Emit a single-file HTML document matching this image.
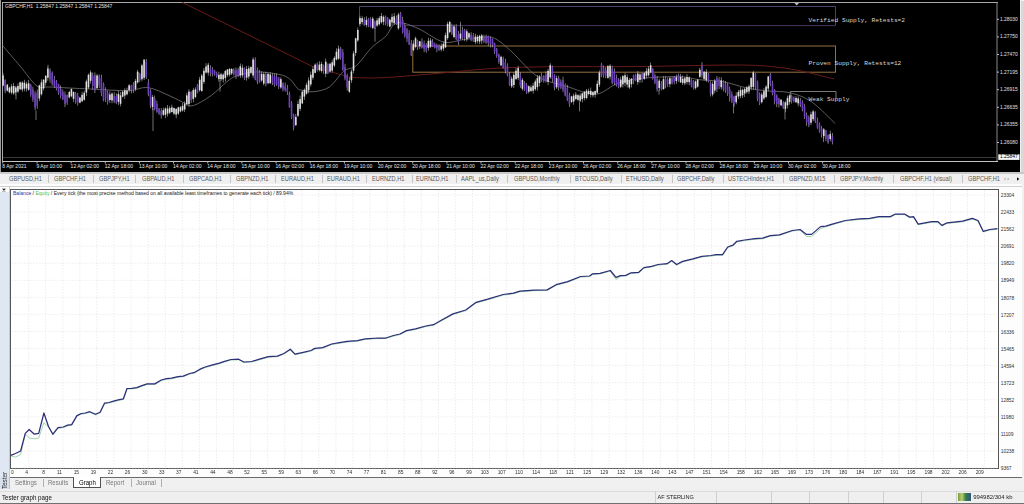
<!DOCTYPE html>
<html><head><meta charset="utf-8"><style>
html,body{margin:0;padding:0;width:1024px;height:504px;overflow:hidden;background:#f0f0f0;position:relative}
.t{position:absolute;white-space:nowrap;line-height:1.2;font-family:'Liberation Sans', sans-serif}
</style></head><body>
<div id="wrap" style="position:absolute;left:0;top:0;width:1024px;height:504px;filter:blur(0.35px)"><svg width="1024" height="172" style="position:absolute;left:0;top:0"><rect x="0" y="0" width="1020" height="172" fill="#000"/><rect x="0" y="0" width="1" height="172" fill="#9a9a9a"/><rect x="1021" y="1" width="3" height="171" fill="#d8d8d8"/><rect x="2" y="2" width="996" height="1" fill="#a8a8a8"/><rect x="2" y="2" width="1" height="160" fill="#a8a8a8"/><rect x="996.5" y="2" width="1" height="160" fill="#8a8a8a"/><rect x="2" y="161" width="996" height="1" fill="#c4c4c4"/><rect x="3" y="157" width="994" height="1" fill="#3a3a3a"/><path d="M794.5 3 L799 3 L796.7 5.6 Z" fill="#bdbdbd"/><path d="M359.5,25.5 V6.5 H835.5 V25.5" fill="none" stroke="#524a78" stroke-width="0.9"/><rect x="405" y="25.1" width="430.5" height="1" fill="#4a3262"/><rect x="412.8" y="46" width="422.7" height="26.2" fill="none" stroke="#94703e" stroke-width="1"/><path d="M790.3 98.5 V91.5 H836 V98.5" fill="none" stroke="#7a7a7a" stroke-width="1"/><path d="M182.5,2.5 L312.3,66.4  C316.2,67.5 328.9,71.4 335.8,73.2 C342.7,75.0 345.5,76.7 353.5,77.4 C361.5,78.1 371.1,78.2 384,77.6 C396.9,77.0 409.7,75.7 431,74 C452.3,72.3 477.2,68.8 512,67.5 C546.8,66.2 602.7,66.9 640,66.5 C677.3,66.1 713.4,64.9 736,65 C758.6,65.1 764.1,65.8 775.7,67 C787.3,68.2 797.1,70.2 805.4,71.9 C813.7,73.6 820.5,75.8 825.3,76.9 C830.1,78.1 832.7,78.5 834.2,78.8" fill="none" stroke="#681a1a" stroke-width="1"/><path d="M3,46 C5.8,49.3 14.3,59.3 20,66 C25.7,72.7 32.0,82.5 37,86 C42.0,89.5 41.2,86.5 50,87 C58.8,87.5 77.0,88.4 90,89 C103.0,89.6 118.3,90.8 128,90.6 C137.7,90.4 141.0,86.7 148,87.6 C155.0,88.5 163.8,93.3 170,96 C176.2,98.7 181.6,101.9 185.5,103.5 C189.4,105.1 189.2,106.8 193.5,105.5 C197.8,104.2 205.4,99.6 211,95.6 C216.6,91.6 222.7,85.0 227,81.7 C231.3,78.4 232.1,77.3 237,75.7 C241.9,74.1 249.4,72.1 256.3,71.9 C263.2,71.7 273.0,73.1 278.6,74.3 C284.2,75.5 286.5,76.6 289.7,79 C292.9,81.4 295.5,86.7 297.6,88.6 C299.7,90.5 299.8,89.7 302.4,90.2 C305.0,90.7 309.0,92.2 313.5,91.7 C318.0,91.2 324.3,90.5 329.4,87 C334.5,83.5 339.4,74.6 343.9,71 C348.4,67.4 351.8,69.5 356.4,65.6 C361.0,61.7 366.8,52.4 371.7,47.5 C376.6,42.6 381.9,40.2 385.6,36.4 C389.3,32.6 390.9,26.7 393.9,24.5 C396.9,22.3 399.2,22.4 403.6,23.2 C408.0,24.0 413.4,26.3 420,29.4 C426.6,32.5 436.3,40.3 443.5,42 C450.7,43.7 456.1,40.5 463.4,39.7 C470.6,38.9 481.4,37.0 487,37 C492.6,37.0 492.8,37.2 497,39.7 C501.2,42.2 505.2,45.8 512,52 C518.8,58.2 528.5,70.9 537.8,76.7 C547.0,82.5 559.6,83.9 567.5,86.6 C575.4,89.2 580.1,91.4 585.4,92.6 C590.7,93.8 594.0,95.1 599.3,93.6 C604.6,92.1 610.4,86.1 617.2,83.6 C624.0,81.1 629.6,79.7 640,78.5 C650.4,77.3 669.8,76.5 679.7,76.7 C689.6,76.9 692.3,78.9 699.5,79.7 C706.7,80.5 715.1,80.3 723,81.7 C730.9,83.1 739.5,86.5 747,88 C754.5,89.5 760.9,90.2 768,91 C775.1,91.8 782.4,90.9 789.6,92.7 C796.8,94.5 803.8,96.6 811.4,101.7 C819.0,106.8 831.2,119.9 835.2,123.5" fill="none" stroke="#7c7c7c" stroke-width="0.75"/><rect x="2.70" y="72.9" width="0.6" height="13.5" fill="#bdbdbd"/><rect x="2.20" y="75.4" width="1.6" height="10.3" fill="#dedede"/><rect x="4.84" y="79.3" width="0.6" height="13.8" fill="#bdbdbd"/><rect x="4.34" y="80.0" width="1.6" height="11.1" fill="#6e42bc"/><rect x="6.98" y="84.0" width="0.6" height="7.5" fill="#bdbdbd"/><rect x="6.48" y="84.7" width="1.6" height="6.0" fill="#dedede"/><rect x="9.11" y="86.7" width="0.6" height="6.7" fill="#bdbdbd"/><rect x="8.61" y="87.6" width="1.6" height="4.7" fill="#dedede"/><rect x="11.25" y="84.1" width="0.6" height="10.3" fill="#bdbdbd"/><rect x="10.75" y="86.3" width="1.6" height="6.3" fill="#dedede"/><rect x="13.39" y="83.0" width="0.6" height="11.8" fill="#bdbdbd"/><rect x="12.89" y="86.0" width="1.6" height="7.4" fill="#dedede"/><rect x="15.53" y="85.9" width="0.6" height="9.4" fill="#bdbdbd"/><rect x="15.03" y="87.4" width="1.6" height="5.1" fill="#dedede"/><rect x="17.66" y="83.6" width="0.6" height="9.5" fill="#bdbdbd"/><rect x="17.16" y="86.0" width="1.6" height="5.5" fill="#dedede"/><rect x="19.80" y="81.6" width="0.6" height="8.7" fill="#bdbdbd"/><rect x="19.30" y="82.3" width="1.6" height="6.9" fill="#dedede"/><rect x="21.94" y="81.1" width="0.6" height="10.7" fill="#bdbdbd"/><rect x="21.44" y="82.6" width="1.6" height="7.0" fill="#dedede"/><rect x="24.07" y="79.8" width="0.6" height="11.5" fill="#bdbdbd"/><rect x="23.57" y="82.7" width="1.6" height="6.0" fill="#dedede"/><rect x="26.21" y="81.7" width="0.6" height="9.9" fill="#bdbdbd"/><rect x="25.71" y="83.8" width="1.6" height="4.7" fill="#dedede"/><rect x="28.35" y="79.9" width="0.6" height="10.8" fill="#bdbdbd"/><rect x="27.85" y="83.3" width="1.6" height="6.5" fill="#dedede"/><rect x="30.49" y="83.9" width="0.6" height="12.9" fill="#bdbdbd"/><rect x="29.99" y="84.8" width="1.6" height="10.0" fill="#6e42bc"/><rect x="32.63" y="86.7" width="0.6" height="15.1" fill="#bdbdbd"/><rect x="32.13" y="89.4" width="1.6" height="10.1" fill="#6e42bc"/><rect x="34.76" y="91.1" width="0.6" height="19.0" fill="#bdbdbd"/><rect x="34.26" y="93.6" width="1.6" height="14.1" fill="#6e42bc"/><rect x="36.90" y="89.5" width="0.6" height="19.4" fill="#bdbdbd"/><rect x="36.40" y="92.6" width="1.6" height="13.1" fill="#6e42bc"/><rect x="39.04" y="84.7" width="0.6" height="16.4" fill="#bdbdbd"/><rect x="38.54" y="85.4" width="1.6" height="13.1" fill="#dedede"/><rect x="41.18" y="79.4" width="0.6" height="16.1" fill="#bdbdbd"/><rect x="40.68" y="82.4" width="1.6" height="11.8" fill="#dedede"/><rect x="43.31" y="79.2" width="0.6" height="11.2" fill="#bdbdbd"/><rect x="42.81" y="79.7" width="1.6" height="8.7" fill="#dedede"/><rect x="45.45" y="75.2" width="0.6" height="10.4" fill="#bdbdbd"/><rect x="44.95" y="75.8" width="1.6" height="6.9" fill="#dedede"/><rect x="47.59" y="66.8" width="0.6" height="14.0" fill="#bdbdbd"/><rect x="47.09" y="68.5" width="1.6" height="9.2" fill="#dedede"/><rect x="49.73" y="68.2" width="0.6" height="14.5" fill="#bdbdbd"/><rect x="49.23" y="70.3" width="1.6" height="9.2" fill="#6e42bc"/><rect x="51.86" y="71.4" width="0.6" height="14.3" fill="#bdbdbd"/><rect x="51.36" y="72.7" width="1.6" height="11.2" fill="#6e42bc"/><rect x="54.00" y="75.9" width="0.6" height="11.8" fill="#bdbdbd"/><rect x="53.50" y="79.2" width="1.6" height="7.4" fill="#6e42bc"/><rect x="56.14" y="80.0" width="0.6" height="10.4" fill="#bdbdbd"/><rect x="55.64" y="81.2" width="1.6" height="7.2" fill="#6e42bc"/><rect x="58.28" y="83.7" width="0.6" height="11.1" fill="#bdbdbd"/><rect x="57.78" y="84.2" width="1.6" height="8.8" fill="#6e42bc"/><rect x="60.41" y="85.3" width="0.6" height="13.1" fill="#bdbdbd"/><rect x="59.91" y="88.7" width="1.6" height="7.2" fill="#6e42bc"/><rect x="62.55" y="89.5" width="0.6" height="10.6" fill="#bdbdbd"/><rect x="62.05" y="92.0" width="1.6" height="7.4" fill="#6e42bc"/><rect x="64.69" y="91.4" width="0.6" height="15.7" fill="#bdbdbd"/><rect x="64.19" y="94.5" width="1.6" height="9.7" fill="#6e42bc"/><rect x="66.83" y="94.4" width="0.6" height="10.5" fill="#bdbdbd"/><rect x="66.33" y="95.2" width="1.6" height="7.2" fill="#6e42bc"/><rect x="68.96" y="90.8" width="0.6" height="7.5" fill="#bdbdbd"/><rect x="68.46" y="92.0" width="1.6" height="5.4" fill="#dedede"/><rect x="71.10" y="88.5" width="0.6" height="8.7" fill="#bdbdbd"/><rect x="70.60" y="89.0" width="1.6" height="7.3" fill="#dedede"/><rect x="73.24" y="91.4" width="0.6" height="10.5" fill="#bdbdbd"/><rect x="72.74" y="92.0" width="1.6" height="6.8" fill="#dedede"/><rect x="75.38" y="92.0" width="0.6" height="11.8" fill="#bdbdbd"/><rect x="74.88" y="93.3" width="1.6" height="9.0" fill="#6e42bc"/><rect x="77.51" y="92.8" width="0.6" height="12.9" fill="#bdbdbd"/><rect x="77.01" y="95.9" width="1.6" height="6.4" fill="#6e42bc"/><rect x="79.65" y="96.8" width="0.6" height="6.6" fill="#bdbdbd"/><rect x="79.15" y="97.6" width="1.6" height="5.0" fill="#dedede"/><rect x="81.79" y="91.8" width="0.6" height="10.4" fill="#bdbdbd"/><rect x="81.29" y="94.8" width="1.6" height="6.4" fill="#dedede"/><rect x="83.93" y="90.7" width="0.6" height="10.0" fill="#bdbdbd"/><rect x="83.43" y="92.8" width="1.6" height="7.0" fill="#dedede"/><rect x="86.06" y="79.4" width="0.6" height="16.7" fill="#bdbdbd"/><rect x="85.56" y="81.4" width="1.6" height="11.2" fill="#dedede"/><rect x="88.20" y="73.5" width="0.6" height="15.5" fill="#bdbdbd"/><rect x="87.70" y="74.8" width="1.6" height="12.7" fill="#dedede"/><rect x="90.34" y="70.3" width="0.6" height="13.3" fill="#bdbdbd"/><rect x="89.84" y="72.4" width="1.6" height="8.4" fill="#dedede"/><rect x="92.48" y="72.5" width="0.6" height="17.1" fill="#bdbdbd"/><rect x="91.98" y="75.4" width="1.6" height="10.7" fill="#6e42bc"/><rect x="94.61" y="72.4" width="0.6" height="20.6" fill="#bdbdbd"/><rect x="94.11" y="75.3" width="1.6" height="14.9" fill="#6e42bc"/><rect x="96.75" y="73.9" width="0.6" height="14.8" fill="#bdbdbd"/><rect x="96.25" y="75.5" width="1.6" height="12.7" fill="#dedede"/><rect x="98.89" y="74.4" width="0.6" height="13.7" fill="#bdbdbd"/><rect x="98.39" y="75.6" width="1.6" height="9.8" fill="#6e42bc"/><rect x="101.03" y="74.7" width="0.6" height="21.5" fill="#bdbdbd"/><rect x="100.53" y="78.0" width="1.6" height="14.8" fill="#6e42bc"/><rect x="103.16" y="82.4" width="0.6" height="19.0" fill="#bdbdbd"/><rect x="102.66" y="83.6" width="1.6" height="16.7" fill="#6e42bc"/><rect x="105.30" y="87.3" width="0.6" height="14.6" fill="#bdbdbd"/><rect x="104.80" y="89.7" width="1.6" height="9.0" fill="#6e42bc"/><rect x="107.44" y="90.6" width="0.6" height="14.0" fill="#bdbdbd"/><rect x="106.94" y="93.0" width="1.6" height="8.7" fill="#6e42bc"/><rect x="109.58" y="91.3" width="0.6" height="11.6" fill="#bdbdbd"/><rect x="109.08" y="94.5" width="1.6" height="5.5" fill="#dedede"/><rect x="111.71" y="92.5" width="0.6" height="10.7" fill="#bdbdbd"/><rect x="111.21" y="93.6" width="1.6" height="6.8" fill="#dedede"/><rect x="113.85" y="92.3" width="0.6" height="10.9" fill="#bdbdbd"/><rect x="113.35" y="95.7" width="1.6" height="5.7" fill="#6e42bc"/><rect x="115.99" y="93.4" width="0.6" height="10.8" fill="#bdbdbd"/><rect x="115.49" y="96.1" width="1.6" height="7.1" fill="#6e42bc"/><rect x="118.13" y="90.8" width="0.6" height="14.2" fill="#bdbdbd"/><rect x="117.63" y="94.0" width="1.6" height="8.0" fill="#dedede"/><rect x="120.26" y="92.0" width="0.6" height="14.3" fill="#bdbdbd"/><rect x="119.76" y="95.4" width="1.6" height="8.4" fill="#dedede"/><rect x="122.40" y="90.9" width="0.6" height="6.4" fill="#bdbdbd"/><rect x="121.90" y="91.8" width="1.6" height="4.9" fill="#dedede"/><rect x="124.54" y="88.3" width="0.6" height="10.5" fill="#bdbdbd"/><rect x="124.04" y="90.4" width="1.6" height="5.1" fill="#dedede"/><rect x="126.68" y="87.6" width="0.6" height="7.8" fill="#bdbdbd"/><rect x="126.18" y="90.6" width="1.6" height="3.7" fill="#dedede"/><rect x="128.81" y="84.1" width="0.6" height="8.3" fill="#bdbdbd"/><rect x="128.31" y="85.3" width="1.6" height="4.8" fill="#dedede"/><rect x="130.95" y="84.8" width="0.6" height="8.5" fill="#bdbdbd"/><rect x="130.45" y="85.7" width="1.6" height="4.3" fill="#6e42bc"/><rect x="133.09" y="82.1" width="0.6" height="10.8" fill="#bdbdbd"/><rect x="132.59" y="84.4" width="1.6" height="5.4" fill="#6e42bc"/><rect x="135.22" y="78.9" width="0.6" height="12.3" fill="#bdbdbd"/><rect x="134.72" y="80.9" width="1.6" height="8.2" fill="#dedede"/><rect x="137.36" y="69.9" width="0.6" height="13.6" fill="#bdbdbd"/><rect x="136.86" y="71.7" width="1.6" height="10.7" fill="#dedede"/><rect x="139.50" y="72.8" width="0.6" height="9.2" fill="#bdbdbd"/><rect x="139.00" y="73.8" width="1.6" height="6.2" fill="#6e42bc"/><rect x="141.64" y="63.9" width="0.6" height="17.3" fill="#bdbdbd"/><rect x="141.14" y="65.4" width="1.6" height="13.8" fill="#dedede"/><rect x="143.78" y="58.9" width="0.6" height="21.1" fill="#bdbdbd"/><rect x="143.28" y="59.7" width="1.6" height="18.1" fill="#dedede"/><rect x="145.91" y="58.9" width="0.6" height="20.1" fill="#bdbdbd"/><rect x="145.41" y="61.7" width="1.6" height="15.2" fill="#6e42bc"/><rect x="148.05" y="79.1" width="0.6" height="17.1" fill="#bdbdbd"/><rect x="147.55" y="82.3" width="1.6" height="12.0" fill="#6e42bc"/><rect x="150.19" y="89.2" width="0.6" height="18.9" fill="#bdbdbd"/><rect x="149.69" y="91.2" width="1.6" height="14.3" fill="#6e42bc"/><rect x="152.32" y="95.0" width="0.6" height="15.2" fill="#bdbdbd"/><rect x="151.82" y="97.0" width="1.6" height="10.0" fill="#dedede"/><rect x="154.46" y="95.6" width="0.6" height="14.9" fill="#bdbdbd"/><rect x="153.96" y="98.9" width="1.6" height="10.3" fill="#6e42bc"/><rect x="156.60" y="100.7" width="0.6" height="12.1" fill="#bdbdbd"/><rect x="156.10" y="103.7" width="1.6" height="8.2" fill="#6e42bc"/><rect x="158.74" y="108.0" width="0.6" height="6.9" fill="#bdbdbd"/><rect x="158.24" y="108.7" width="1.6" height="5.0" fill="#6e42bc"/><rect x="160.88" y="108.1" width="0.6" height="10.5" fill="#bdbdbd"/><rect x="160.38" y="111.0" width="1.6" height="4.5" fill="#6e42bc"/><rect x="163.01" y="107.7" width="0.6" height="8.1" fill="#bdbdbd"/><rect x="162.51" y="110.2" width="1.6" height="4.6" fill="#dedede"/><rect x="165.15" y="107.4" width="0.6" height="10.8" fill="#bdbdbd"/><rect x="164.65" y="108.5" width="1.6" height="6.3" fill="#dedede"/><rect x="167.29" y="105.0" width="0.6" height="11.6" fill="#bdbdbd"/><rect x="166.79" y="108.5" width="1.6" height="5.1" fill="#dedede"/><rect x="169.43" y="106.0" width="0.6" height="8.2" fill="#bdbdbd"/><rect x="168.93" y="108.1" width="1.6" height="4.6" fill="#dedede"/><rect x="171.56" y="104.7" width="0.6" height="7.9" fill="#bdbdbd"/><rect x="171.06" y="107.3" width="1.6" height="4.7" fill="#dedede"/><rect x="173.70" y="107.5" width="0.6" height="7.6" fill="#bdbdbd"/><rect x="173.20" y="108.1" width="1.6" height="5.5" fill="#dedede"/><rect x="175.84" y="108.3" width="0.6" height="9.9" fill="#bdbdbd"/><rect x="175.34" y="108.9" width="1.6" height="5.7" fill="#dedede"/><rect x="177.97" y="106.6" width="0.6" height="8.2" fill="#bdbdbd"/><rect x="177.47" y="107.4" width="1.6" height="6.1" fill="#dedede"/><rect x="180.11" y="105.9" width="0.6" height="6.4" fill="#bdbdbd"/><rect x="179.61" y="107.2" width="1.6" height="4.2" fill="#dedede"/><rect x="182.25" y="102.9" width="0.6" height="8.7" fill="#bdbdbd"/><rect x="181.75" y="105.9" width="1.6" height="4.5" fill="#dedede"/><rect x="184.39" y="101.4" width="0.6" height="10.7" fill="#bdbdbd"/><rect x="183.89" y="103.6" width="1.6" height="5.9" fill="#dedede"/><rect x="186.53" y="92.8" width="0.6" height="13.0" fill="#bdbdbd"/><rect x="186.03" y="95.4" width="1.6" height="8.7" fill="#dedede"/><rect x="188.66" y="89.2" width="0.6" height="17.7" fill="#bdbdbd"/><rect x="188.16" y="91.6" width="1.6" height="12.4" fill="#dedede"/><rect x="190.80" y="91.3" width="0.6" height="11.6" fill="#bdbdbd"/><rect x="190.30" y="92.0" width="1.6" height="7.8" fill="#6e42bc"/><rect x="192.94" y="87.9" width="0.6" height="14.3" fill="#bdbdbd"/><rect x="192.44" y="90.1" width="1.6" height="8.8" fill="#dedede"/><rect x="195.08" y="87.3" width="0.6" height="10.9" fill="#bdbdbd"/><rect x="194.58" y="89.4" width="1.6" height="7.6" fill="#dedede"/><rect x="197.21" y="84.0" width="0.6" height="9.3" fill="#bdbdbd"/><rect x="196.71" y="84.7" width="1.6" height="7.5" fill="#6e42bc"/><rect x="199.35" y="76.9" width="0.6" height="14.7" fill="#bdbdbd"/><rect x="198.85" y="79.7" width="1.6" height="10.5" fill="#dedede"/><rect x="201.49" y="74.0" width="0.6" height="17.5" fill="#bdbdbd"/><rect x="200.99" y="75.6" width="1.6" height="15.5" fill="#dedede"/><rect x="203.62" y="68.0" width="0.6" height="15.9" fill="#bdbdbd"/><rect x="203.12" y="70.7" width="1.6" height="11.1" fill="#dedede"/><rect x="205.76" y="63.2" width="0.6" height="10.3" fill="#bdbdbd"/><rect x="205.26" y="66.5" width="1.6" height="6.1" fill="#dedede"/><rect x="207.90" y="62.8" width="0.6" height="12.8" fill="#bdbdbd"/><rect x="207.40" y="64.8" width="1.6" height="7.8" fill="#dedede"/><rect x="210.04" y="65.3" width="0.6" height="11.0" fill="#bdbdbd"/><rect x="209.54" y="67.9" width="1.6" height="5.0" fill="#6e42bc"/><rect x="212.18" y="67.1" width="0.6" height="9.4" fill="#bdbdbd"/><rect x="211.68" y="69.7" width="1.6" height="4.4" fill="#6e42bc"/><rect x="214.31" y="69.8" width="0.6" height="5.9" fill="#bdbdbd"/><rect x="213.81" y="70.4" width="1.6" height="4.4" fill="#6e42bc"/><rect x="216.45" y="71.6" width="0.6" height="6.2" fill="#bdbdbd"/><rect x="215.95" y="72.9" width="1.6" height="3.9" fill="#6e42bc"/><rect x="218.59" y="71.7" width="0.6" height="9.9" fill="#bdbdbd"/><rect x="218.09" y="74.8" width="1.6" height="4.3" fill="#dedede"/><rect x="220.72" y="72.9" width="0.6" height="8.2" fill="#bdbdbd"/><rect x="220.22" y="74.3" width="1.6" height="4.9" fill="#dedede"/><rect x="222.86" y="73.3" width="0.6" height="9.4" fill="#bdbdbd"/><rect x="222.36" y="74.6" width="1.6" height="4.7" fill="#dedede"/><rect x="225.00" y="69.9" width="0.6" height="11.7" fill="#bdbdbd"/><rect x="224.50" y="71.1" width="1.6" height="7.0" fill="#dedede"/><rect x="227.14" y="69.0" width="0.6" height="7.8" fill="#bdbdbd"/><rect x="226.64" y="69.5" width="1.6" height="5.6" fill="#dedede"/><rect x="229.28" y="67.9" width="0.6" height="8.7" fill="#bdbdbd"/><rect x="228.78" y="69.0" width="1.6" height="5.6" fill="#dedede"/><rect x="231.41" y="68.2" width="0.6" height="6.8" fill="#bdbdbd"/><rect x="230.91" y="69.0" width="1.6" height="4.4" fill="#dedede"/><rect x="233.55" y="68.1" width="0.6" height="7.4" fill="#bdbdbd"/><rect x="233.05" y="69.5" width="1.6" height="4.8" fill="#6e42bc"/><rect x="235.69" y="67.5" width="0.6" height="11.4" fill="#bdbdbd"/><rect x="235.19" y="70.2" width="1.6" height="6.1" fill="#6e42bc"/><rect x="237.83" y="67.8" width="0.6" height="9.1" fill="#bdbdbd"/><rect x="237.33" y="69.4" width="1.6" height="6.0" fill="#6e42bc"/><rect x="239.96" y="63.5" width="0.6" height="14.4" fill="#bdbdbd"/><rect x="239.46" y="66.2" width="1.6" height="9.3" fill="#dedede"/><rect x="242.10" y="64.5" width="0.6" height="13.1" fill="#bdbdbd"/><rect x="241.60" y="67.7" width="1.6" height="7.6" fill="#dedede"/><rect x="244.24" y="67.3" width="0.6" height="12.7" fill="#bdbdbd"/><rect x="243.74" y="68.2" width="1.6" height="9.7" fill="#6e42bc"/><rect x="246.38" y="66.0" width="0.6" height="14.6" fill="#bdbdbd"/><rect x="245.88" y="69.0" width="1.6" height="8.7" fill="#dedede"/><rect x="248.51" y="65.7" width="0.6" height="13.4" fill="#bdbdbd"/><rect x="248.01" y="68.3" width="1.6" height="8.3" fill="#dedede"/><rect x="250.65" y="66.2" width="0.6" height="8.0" fill="#bdbdbd"/><rect x="250.15" y="67.1" width="1.6" height="5.5" fill="#dedede"/><rect x="252.79" y="57.2" width="0.6" height="20.7" fill="#bdbdbd"/><rect x="252.29" y="59.4" width="1.6" height="16.1" fill="#dedede"/><rect x="254.93" y="57.4" width="0.6" height="22.8" fill="#bdbdbd"/><rect x="254.43" y="59.4" width="1.6" height="20.3" fill="#6e42bc"/><rect x="257.06" y="67.5" width="0.6" height="16.7" fill="#bdbdbd"/><rect x="256.56" y="69.5" width="1.6" height="12.6" fill="#6e42bc"/><rect x="259.20" y="69.9" width="0.6" height="13.0" fill="#bdbdbd"/><rect x="258.70" y="72.7" width="1.6" height="9.0" fill="#6e42bc"/><rect x="261.34" y="71.3" width="0.6" height="10.4" fill="#bdbdbd"/><rect x="260.84" y="73.9" width="1.6" height="6.6" fill="#dedede"/><rect x="263.48" y="72.1" width="0.6" height="13.2" fill="#bdbdbd"/><rect x="262.98" y="74.1" width="1.6" height="9.5" fill="#dedede"/><rect x="265.61" y="71.8" width="0.6" height="14.6" fill="#bdbdbd"/><rect x="265.11" y="74.6" width="1.6" height="9.4" fill="#6e42bc"/><rect x="267.75" y="72.9" width="0.6" height="11.5" fill="#bdbdbd"/><rect x="267.25" y="73.8" width="1.6" height="9.3" fill="#dedede"/><rect x="269.89" y="72.3" width="0.6" height="11.5" fill="#bdbdbd"/><rect x="269.39" y="74.5" width="1.6" height="8.8" fill="#dedede"/><rect x="272.03" y="73.2" width="0.6" height="11.9" fill="#bdbdbd"/><rect x="271.53" y="75.7" width="1.6" height="6.8" fill="#6e42bc"/><rect x="274.16" y="73.7" width="0.6" height="13.2" fill="#bdbdbd"/><rect x="273.66" y="75.8" width="1.6" height="9.3" fill="#6e42bc"/><rect x="276.30" y="73.5" width="0.6" height="12.4" fill="#bdbdbd"/><rect x="275.80" y="76.7" width="1.6" height="8.1" fill="#6e42bc"/><rect x="278.44" y="77.1" width="0.6" height="11.8" fill="#bdbdbd"/><rect x="277.94" y="77.6" width="1.6" height="9.3" fill="#6e42bc"/><rect x="280.57" y="77.3" width="0.6" height="11.5" fill="#bdbdbd"/><rect x="280.07" y="79.2" width="1.6" height="8.3" fill="#dedede"/><rect x="282.71" y="82.2" width="0.6" height="9.2" fill="#bdbdbd"/><rect x="282.21" y="83.3" width="1.6" height="5.9" fill="#6e42bc"/><rect x="284.85" y="82.5" width="0.6" height="8.9" fill="#bdbdbd"/><rect x="284.35" y="85.8" width="1.6" height="4.6" fill="#6e42bc"/><rect x="286.99" y="84.8" width="0.6" height="10.2" fill="#bdbdbd"/><rect x="286.49" y="87.9" width="1.6" height="4.4" fill="#6e42bc"/><rect x="289.12" y="91.6" width="0.6" height="16.3" fill="#bdbdbd"/><rect x="288.62" y="93.6" width="1.6" height="13.7" fill="#6e42bc"/><rect x="291.26" y="101.0" width="0.6" height="18.2" fill="#bdbdbd"/><rect x="290.76" y="102.9" width="1.6" height="14.9" fill="#6e42bc"/><rect x="293.40" y="113.6" width="0.6" height="16.8" fill="#bdbdbd"/><rect x="292.90" y="115.0" width="1.6" height="12.3" fill="#6e42bc"/><rect x="295.54" y="113.9" width="0.6" height="12.1" fill="#bdbdbd"/><rect x="295.04" y="116.9" width="1.6" height="8.2" fill="#dedede"/><rect x="297.68" y="100.7" width="0.6" height="16.3" fill="#bdbdbd"/><rect x="297.18" y="104.0" width="1.6" height="11.7" fill="#dedede"/><rect x="299.81" y="95.6" width="0.6" height="15.5" fill="#bdbdbd"/><rect x="299.31" y="99.1" width="1.6" height="9.7" fill="#dedede"/><rect x="301.95" y="90.4" width="0.6" height="13.7" fill="#bdbdbd"/><rect x="301.45" y="91.7" width="1.6" height="11.7" fill="#dedede"/><rect x="304.09" y="88.4" width="0.6" height="11.5" fill="#bdbdbd"/><rect x="303.59" y="89.8" width="1.6" height="6.8" fill="#dedede"/><rect x="306.23" y="82.7" width="0.6" height="12.0" fill="#bdbdbd"/><rect x="305.73" y="84.8" width="1.6" height="8.9" fill="#dedede"/><rect x="308.36" y="77.4" width="0.6" height="15.9" fill="#bdbdbd"/><rect x="307.86" y="80.5" width="1.6" height="9.8" fill="#dedede"/><rect x="310.50" y="71.5" width="0.6" height="15.0" fill="#bdbdbd"/><rect x="310.00" y="74.8" width="1.6" height="9.6" fill="#dedede"/><rect x="312.64" y="66.4" width="0.6" height="13.2" fill="#bdbdbd"/><rect x="312.14" y="69.1" width="1.6" height="8.6" fill="#dedede"/><rect x="314.78" y="63.3" width="0.6" height="10.1" fill="#bdbdbd"/><rect x="314.28" y="64.7" width="1.6" height="8.1" fill="#dedede"/><rect x="316.91" y="62.3" width="0.6" height="9.3" fill="#bdbdbd"/><rect x="316.41" y="64.2" width="1.6" height="5.8" fill="#6e42bc"/><rect x="319.05" y="61.2" width="0.6" height="10.3" fill="#bdbdbd"/><rect x="318.55" y="64.6" width="1.6" height="5.6" fill="#dedede"/><rect x="321.19" y="61.8" width="0.6" height="10.8" fill="#bdbdbd"/><rect x="320.69" y="64.0" width="1.6" height="7.0" fill="#dedede"/><rect x="323.32" y="64.6" width="0.6" height="9.3" fill="#bdbdbd"/><rect x="322.82" y="65.7" width="1.6" height="5.0" fill="#6e42bc"/><rect x="325.46" y="58.5" width="0.6" height="18.7" fill="#bdbdbd"/><rect x="324.96" y="61.7" width="1.6" height="12.0" fill="#dedede"/><rect x="327.60" y="63.3" width="0.6" height="10.9" fill="#bdbdbd"/><rect x="327.10" y="64.3" width="1.6" height="9.1" fill="#6e42bc"/><rect x="329.74" y="62.6" width="0.6" height="10.2" fill="#bdbdbd"/><rect x="329.24" y="63.8" width="1.6" height="7.7" fill="#dedede"/><rect x="331.88" y="59.7" width="0.6" height="12.6" fill="#bdbdbd"/><rect x="331.38" y="62.4" width="1.6" height="8.1" fill="#dedede"/><rect x="334.01" y="56.3" width="0.6" height="10.8" fill="#bdbdbd"/><rect x="333.51" y="57.9" width="1.6" height="7.6" fill="#dedede"/><rect x="336.15" y="48.3" width="0.6" height="12.1" fill="#bdbdbd"/><rect x="335.65" y="51.7" width="1.6" height="7.8" fill="#dedede"/><rect x="338.29" y="45.6" width="0.6" height="14.2" fill="#bdbdbd"/><rect x="337.79" y="48.7" width="1.6" height="10.0" fill="#dedede"/><rect x="340.43" y="46.8" width="0.6" height="12.9" fill="#bdbdbd"/><rect x="339.93" y="48.4" width="1.6" height="9.4" fill="#6e42bc"/><rect x="342.56" y="49.1" width="0.6" height="21.6" fill="#bdbdbd"/><rect x="342.06" y="52.2" width="1.6" height="18.0" fill="#6e42bc"/><rect x="344.70" y="63.8" width="0.6" height="16.5" fill="#bdbdbd"/><rect x="344.20" y="67.0" width="1.6" height="11.4" fill="#6e42bc"/><rect x="346.84" y="73.8" width="0.6" height="16.8" fill="#bdbdbd"/><rect x="346.34" y="75.5" width="1.6" height="11.9" fill="#6e42bc"/><rect x="348.98" y="77.3" width="0.6" height="15.6" fill="#bdbdbd"/><rect x="348.48" y="80.8" width="1.6" height="10.9" fill="#dedede"/><rect x="351.11" y="69.5" width="0.6" height="13.4" fill="#bdbdbd"/><rect x="350.61" y="71.5" width="1.6" height="8.8" fill="#dedede"/><rect x="353.25" y="50.9" width="0.6" height="22.5" fill="#bdbdbd"/><rect x="352.75" y="53.4" width="1.6" height="17.2" fill="#dedede"/><rect x="355.39" y="37.7" width="0.6" height="18.1" fill="#bdbdbd"/><rect x="354.89" y="38.3" width="1.6" height="14.6" fill="#dedede"/><rect x="357.53" y="27.6" width="0.6" height="14.3" fill="#bdbdbd"/><rect x="357.03" y="30.0" width="1.6" height="10.4" fill="#dedede"/><rect x="359.66" y="15.6" width="0.6" height="10.9" fill="#bdbdbd"/><rect x="359.16" y="18.0" width="1.6" height="5.9" fill="#dedede"/><rect x="361.80" y="16.1" width="0.6" height="8.3" fill="#bdbdbd"/><rect x="361.30" y="18.2" width="1.6" height="3.9" fill="#dedede"/><rect x="363.94" y="17.1" width="0.6" height="8.7" fill="#bdbdbd"/><rect x="363.44" y="19.4" width="1.6" height="5.9" fill="#6e42bc"/><rect x="366.08" y="16.4" width="0.6" height="11.0" fill="#bdbdbd"/><rect x="365.58" y="19.8" width="1.6" height="5.1" fill="#dedede"/><rect x="368.21" y="17.9" width="0.6" height="9.3" fill="#bdbdbd"/><rect x="367.71" y="19.1" width="1.6" height="6.8" fill="#6e42bc"/><rect x="370.35" y="17.2" width="0.6" height="10.3" fill="#bdbdbd"/><rect x="369.85" y="18.7" width="1.6" height="8.3" fill="#6e42bc"/><rect x="372.49" y="16.8" width="0.6" height="12.3" fill="#bdbdbd"/><rect x="371.99" y="18.6" width="1.6" height="9.3" fill="#dedede"/><rect x="374.62" y="20.5" width="0.6" height="8.6" fill="#bdbdbd"/><rect x="374.12" y="21.7" width="1.6" height="6.8" fill="#6e42bc"/><rect x="376.76" y="17.8" width="0.6" height="9.0" fill="#bdbdbd"/><rect x="376.26" y="20.3" width="1.6" height="5.3" fill="#dedede"/><rect x="378.90" y="16.2" width="0.6" height="9.2" fill="#bdbdbd"/><rect x="378.40" y="18.2" width="1.6" height="6.1" fill="#dedede"/><rect x="381.04" y="13.0" width="0.6" height="10.6" fill="#bdbdbd"/><rect x="380.54" y="16.0" width="1.6" height="6.4" fill="#dedede"/><rect x="383.18" y="15.4" width="0.6" height="9.8" fill="#bdbdbd"/><rect x="382.68" y="16.8" width="1.6" height="5.1" fill="#dedede"/><rect x="385.31" y="15.5" width="0.6" height="9.8" fill="#bdbdbd"/><rect x="384.81" y="16.7" width="1.6" height="6.9" fill="#6e42bc"/><rect x="387.45" y="17.0" width="0.6" height="9.4" fill="#bdbdbd"/><rect x="386.95" y="18.0" width="1.6" height="6.8" fill="#6e42bc"/><rect x="389.59" y="18.8" width="0.6" height="8.5" fill="#bdbdbd"/><rect x="389.09" y="19.7" width="1.6" height="6.9" fill="#dedede"/><rect x="391.73" y="13.7" width="0.6" height="11.9" fill="#bdbdbd"/><rect x="391.23" y="16.9" width="1.6" height="5.5" fill="#dedede"/><rect x="393.86" y="13.0" width="0.6" height="11.7" fill="#bdbdbd"/><rect x="393.36" y="16.3" width="1.6" height="6.9" fill="#dedede"/><rect x="396.00" y="15.5" width="0.6" height="9.5" fill="#bdbdbd"/><rect x="395.50" y="18.2" width="1.6" height="6.1" fill="#6e42bc"/><rect x="398.14" y="12.8" width="0.6" height="17.0" fill="#bdbdbd"/><rect x="397.64" y="14.5" width="1.6" height="13.9" fill="#dedede"/><rect x="400.28" y="11.9" width="0.6" height="15.4" fill="#bdbdbd"/><rect x="399.78" y="13.2" width="1.6" height="12.5" fill="#6e42bc"/><rect x="402.41" y="16.7" width="0.6" height="16.8" fill="#bdbdbd"/><rect x="401.91" y="20.1" width="1.6" height="12.3" fill="#6e42bc"/><rect x="404.55" y="23.1" width="0.6" height="14.7" fill="#bdbdbd"/><rect x="404.05" y="26.0" width="1.6" height="9.9" fill="#6e42bc"/><rect x="406.69" y="27.8" width="0.6" height="14.4" fill="#bdbdbd"/><rect x="406.19" y="29.4" width="1.6" height="9.5" fill="#6e42bc"/><rect x="408.83" y="30.1" width="0.6" height="15.0" fill="#bdbdbd"/><rect x="408.33" y="33.3" width="1.6" height="11.3" fill="#6e42bc"/><rect x="410.96" y="39.9" width="0.6" height="16.2" fill="#bdbdbd"/><rect x="410.46" y="42.7" width="1.6" height="12.8" fill="#6e42bc"/><rect x="413.10" y="40.3" width="0.6" height="11.0" fill="#bdbdbd"/><rect x="412.60" y="43.6" width="1.6" height="6.5" fill="#dedede"/><rect x="415.24" y="36.7" width="0.6" height="11.5" fill="#bdbdbd"/><rect x="414.74" y="38.2" width="1.6" height="8.7" fill="#dedede"/><rect x="417.38" y="39.7" width="0.6" height="10.3" fill="#bdbdbd"/><rect x="416.88" y="41.0" width="1.6" height="6.4" fill="#6e42bc"/><rect x="419.51" y="40.8" width="0.6" height="8.2" fill="#bdbdbd"/><rect x="419.01" y="41.3" width="1.6" height="4.9" fill="#dedede"/><rect x="421.65" y="38.3" width="0.6" height="10.2" fill="#bdbdbd"/><rect x="421.15" y="41.7" width="1.6" height="6.3" fill="#6e42bc"/><rect x="423.79" y="40.5" width="0.6" height="11.8" fill="#bdbdbd"/><rect x="423.29" y="43.8" width="1.6" height="5.0" fill="#6e42bc"/><rect x="425.93" y="43.0" width="0.6" height="9.7" fill="#bdbdbd"/><rect x="425.43" y="44.8" width="1.6" height="6.0" fill="#6e42bc"/><rect x="428.06" y="37.8" width="0.6" height="12.8" fill="#bdbdbd"/><rect x="427.56" y="40.8" width="1.6" height="7.1" fill="#dedede"/><rect x="430.20" y="38.2" width="0.6" height="9.8" fill="#bdbdbd"/><rect x="429.70" y="40.5" width="1.6" height="6.0" fill="#dedede"/><rect x="432.34" y="39.0" width="0.6" height="8.0" fill="#bdbdbd"/><rect x="431.84" y="41.9" width="1.6" height="4.4" fill="#6e42bc"/><rect x="434.48" y="42.6" width="0.6" height="5.9" fill="#bdbdbd"/><rect x="433.98" y="43.8" width="1.6" height="4.0" fill="#6e42bc"/><rect x="436.61" y="43.6" width="0.6" height="8.6" fill="#bdbdbd"/><rect x="436.11" y="45.0" width="1.6" height="3.6" fill="#6e42bc"/><rect x="438.75" y="44.3" width="0.6" height="6.6" fill="#bdbdbd"/><rect x="438.25" y="45.6" width="1.6" height="4.6" fill="#6e42bc"/><rect x="440.89" y="43.4" width="0.6" height="8.0" fill="#bdbdbd"/><rect x="440.39" y="46.1" width="1.6" height="3.5" fill="#dedede"/><rect x="443.03" y="41.5" width="0.6" height="9.6" fill="#bdbdbd"/><rect x="442.53" y="43.9" width="1.6" height="4.7" fill="#dedede"/><rect x="445.16" y="32.7" width="0.6" height="15.4" fill="#bdbdbd"/><rect x="444.66" y="35.2" width="1.6" height="12.1" fill="#dedede"/><rect x="447.30" y="21.7" width="0.6" height="18.0" fill="#bdbdbd"/><rect x="446.80" y="23.9" width="1.6" height="14.2" fill="#dedede"/><rect x="449.44" y="20.8" width="0.6" height="12.5" fill="#bdbdbd"/><rect x="448.94" y="22.0" width="1.6" height="10.1" fill="#dedede"/><rect x="451.58" y="23.7" width="0.6" height="11.5" fill="#bdbdbd"/><rect x="451.08" y="25.9" width="1.6" height="7.8" fill="#6e42bc"/><rect x="453.71" y="24.4" width="0.6" height="13.9" fill="#bdbdbd"/><rect x="453.21" y="26.4" width="1.6" height="10.6" fill="#dedede"/><rect x="455.85" y="24.1" width="0.6" height="16.0" fill="#bdbdbd"/><rect x="455.35" y="27.5" width="1.6" height="11.7" fill="#6e42bc"/><rect x="457.99" y="31.0" width="0.6" height="14.2" fill="#bdbdbd"/><rect x="457.49" y="34.1" width="1.6" height="8.0" fill="#6e42bc"/><rect x="460.12" y="32.8" width="0.6" height="7.0" fill="#bdbdbd"/><rect x="459.62" y="33.6" width="1.6" height="5.1" fill="#dedede"/><rect x="462.26" y="26.8" width="0.6" height="13.1" fill="#bdbdbd"/><rect x="461.76" y="30.1" width="1.6" height="8.2" fill="#6e42bc"/><rect x="464.40" y="28.8" width="0.6" height="12.3" fill="#bdbdbd"/><rect x="463.90" y="30.0" width="1.6" height="8.1" fill="#6e42bc"/><rect x="466.54" y="29.0" width="0.6" height="12.6" fill="#bdbdbd"/><rect x="466.04" y="31.3" width="1.6" height="7.9" fill="#dedede"/><rect x="468.68" y="32.4" width="0.6" height="6.3" fill="#bdbdbd"/><rect x="468.18" y="33.3" width="1.6" height="4.3" fill="#dedede"/><rect x="470.81" y="32.2" width="0.6" height="9.0" fill="#bdbdbd"/><rect x="470.31" y="34.7" width="1.6" height="5.5" fill="#6e42bc"/><rect x="472.95" y="33.0" width="0.6" height="8.9" fill="#bdbdbd"/><rect x="472.45" y="35.5" width="1.6" height="5.3" fill="#6e42bc"/><rect x="475.09" y="33.7" width="0.6" height="10.4" fill="#bdbdbd"/><rect x="474.59" y="36.6" width="1.6" height="5.4" fill="#dedede"/><rect x="477.23" y="35.0" width="0.6" height="8.3" fill="#bdbdbd"/><rect x="476.73" y="36.7" width="1.6" height="4.4" fill="#dedede"/><rect x="479.36" y="34.8" width="0.6" height="9.3" fill="#bdbdbd"/><rect x="478.86" y="35.8" width="1.6" height="5.8" fill="#dedede"/><rect x="481.50" y="34.0" width="0.6" height="10.0" fill="#bdbdbd"/><rect x="481.00" y="35.4" width="1.6" height="5.2" fill="#dedede"/><rect x="483.64" y="34.8" width="0.6" height="8.3" fill="#bdbdbd"/><rect x="483.14" y="36.4" width="1.6" height="5.0" fill="#6e42bc"/><rect x="485.78" y="34.6" width="0.6" height="9.2" fill="#bdbdbd"/><rect x="485.28" y="36.2" width="1.6" height="6.6" fill="#6e42bc"/><rect x="487.91" y="35.5" width="0.6" height="10.6" fill="#bdbdbd"/><rect x="487.41" y="36.1" width="1.6" height="6.9" fill="#6e42bc"/><rect x="490.05" y="36.5" width="0.6" height="10.9" fill="#bdbdbd"/><rect x="489.55" y="38.3" width="1.6" height="6.0" fill="#6e42bc"/><rect x="492.19" y="38.2" width="0.6" height="9.1" fill="#bdbdbd"/><rect x="491.69" y="38.7" width="1.6" height="6.4" fill="#6e42bc"/><rect x="494.33" y="42.6" width="0.6" height="11.4" fill="#bdbdbd"/><rect x="493.83" y="43.4" width="1.6" height="8.3" fill="#6e42bc"/><rect x="496.46" y="48.0" width="0.6" height="9.7" fill="#bdbdbd"/><rect x="495.96" y="49.0" width="1.6" height="7.4" fill="#6e42bc"/><rect x="498.60" y="53.6" width="0.6" height="10.2" fill="#bdbdbd"/><rect x="498.10" y="54.5" width="1.6" height="7.4" fill="#6e42bc"/><rect x="500.74" y="55.7" width="0.6" height="10.5" fill="#bdbdbd"/><rect x="500.24" y="56.8" width="1.6" height="8.5" fill="#dedede"/><rect x="502.88" y="56.7" width="0.6" height="12.0" fill="#bdbdbd"/><rect x="502.38" y="58.6" width="1.6" height="9.4" fill="#6e42bc"/><rect x="505.01" y="58.8" width="0.6" height="14.5" fill="#bdbdbd"/><rect x="504.51" y="62.0" width="1.6" height="8.9" fill="#6e42bc"/><rect x="507.15" y="63.3" width="0.6" height="13.1" fill="#bdbdbd"/><rect x="506.65" y="66.1" width="1.6" height="9.0" fill="#6e42bc"/><rect x="509.29" y="72.1" width="0.6" height="13.8" fill="#bdbdbd"/><rect x="508.79" y="75.1" width="1.6" height="9.8" fill="#6e42bc"/><rect x="511.43" y="76.5" width="0.6" height="11.5" fill="#bdbdbd"/><rect x="510.93" y="78.6" width="1.6" height="7.8" fill="#dedede"/><rect x="513.56" y="72.2" width="0.6" height="15.9" fill="#bdbdbd"/><rect x="513.06" y="74.9" width="1.6" height="10.1" fill="#dedede"/><rect x="515.70" y="68.0" width="0.6" height="11.7" fill="#bdbdbd"/><rect x="515.20" y="70.8" width="1.6" height="8.3" fill="#dedede"/><rect x="517.84" y="65.8" width="0.6" height="14.3" fill="#bdbdbd"/><rect x="517.34" y="68.1" width="1.6" height="9.8" fill="#dedede"/><rect x="519.98" y="72.4" width="0.6" height="15.5" fill="#bdbdbd"/><rect x="519.48" y="74.1" width="1.6" height="11.5" fill="#6e42bc"/><rect x="522.11" y="78.0" width="0.6" height="12.7" fill="#bdbdbd"/><rect x="521.61" y="79.8" width="1.6" height="9.0" fill="#dedede"/><rect x="524.25" y="81.0" width="0.6" height="9.9" fill="#bdbdbd"/><rect x="523.75" y="82.9" width="1.6" height="6.7" fill="#6e42bc"/><rect x="526.39" y="83.0" width="0.6" height="11.0" fill="#bdbdbd"/><rect x="525.89" y="84.9" width="1.6" height="8.1" fill="#6e42bc"/><rect x="528.53" y="85.3" width="0.6" height="8.2" fill="#bdbdbd"/><rect x="528.03" y="86.2" width="1.6" height="5.5" fill="#dedede"/><rect x="530.66" y="85.2" width="0.6" height="6.5" fill="#bdbdbd"/><rect x="530.16" y="87.3" width="1.6" height="3.8" fill="#dedede"/><rect x="532.80" y="83.0" width="0.6" height="10.6" fill="#bdbdbd"/><rect x="532.30" y="85.7" width="1.6" height="5.0" fill="#dedede"/><rect x="534.94" y="79.5" width="0.6" height="11.3" fill="#bdbdbd"/><rect x="534.44" y="81.5" width="1.6" height="7.7" fill="#dedede"/><rect x="537.08" y="75.0" width="0.6" height="15.6" fill="#bdbdbd"/><rect x="536.58" y="78.1" width="1.6" height="9.0" fill="#dedede"/><rect x="539.21" y="75.2" width="0.6" height="11.1" fill="#bdbdbd"/><rect x="538.71" y="76.3" width="1.6" height="6.6" fill="#dedede"/><rect x="541.35" y="72.8" width="0.6" height="9.0" fill="#bdbdbd"/><rect x="540.85" y="76.0" width="1.6" height="4.8" fill="#6e42bc"/><rect x="543.49" y="75.2" width="0.6" height="7.4" fill="#bdbdbd"/><rect x="542.99" y="75.9" width="1.6" height="5.2" fill="#6e42bc"/><rect x="545.63" y="71.3" width="0.6" height="11.3" fill="#bdbdbd"/><rect x="545.13" y="74.5" width="1.6" height="6.8" fill="#6e42bc"/><rect x="547.76" y="68.8" width="0.6" height="16.3" fill="#bdbdbd"/><rect x="547.26" y="70.8" width="1.6" height="11.0" fill="#dedede"/><rect x="549.90" y="63.2" width="0.6" height="15.6" fill="#bdbdbd"/><rect x="549.40" y="65.2" width="1.6" height="12.1" fill="#dedede"/><rect x="552.04" y="65.5" width="0.6" height="16.7" fill="#bdbdbd"/><rect x="551.54" y="66.5" width="1.6" height="12.4" fill="#6e42bc"/><rect x="554.18" y="74.2" width="0.6" height="16.0" fill="#bdbdbd"/><rect x="553.68" y="75.2" width="1.6" height="12.2" fill="#6e42bc"/><rect x="556.31" y="75.7" width="0.6" height="13.2" fill="#bdbdbd"/><rect x="555.81" y="78.1" width="1.6" height="9.2" fill="#dedede"/><rect x="558.45" y="75.7" width="0.6" height="14.9" fill="#bdbdbd"/><rect x="557.95" y="77.9" width="1.6" height="9.6" fill="#6e42bc"/><rect x="560.59" y="79.4" width="0.6" height="9.8" fill="#bdbdbd"/><rect x="560.09" y="81.8" width="1.6" height="5.8" fill="#6e42bc"/><rect x="562.73" y="76.7" width="0.6" height="15.5" fill="#bdbdbd"/><rect x="562.23" y="80.1" width="1.6" height="9.8" fill="#6e42bc"/><rect x="564.86" y="83.2" width="0.6" height="13.2" fill="#bdbdbd"/><rect x="564.36" y="85.0" width="1.6" height="10.4" fill="#6e42bc"/><rect x="567.00" y="84.8" width="0.6" height="16.2" fill="#bdbdbd"/><rect x="566.50" y="87.8" width="1.6" height="12.0" fill="#6e42bc"/><rect x="569.14" y="92.7" width="0.6" height="14.1" fill="#bdbdbd"/><rect x="568.64" y="95.0" width="1.6" height="9.3" fill="#6e42bc"/><rect x="571.28" y="95.8" width="0.6" height="7.2" fill="#bdbdbd"/><rect x="570.78" y="96.4" width="1.6" height="5.6" fill="#dedede"/><rect x="573.41" y="93.6" width="0.6" height="11.1" fill="#bdbdbd"/><rect x="572.91" y="95.6" width="1.6" height="5.8" fill="#dedede"/><rect x="575.55" y="92.1" width="0.6" height="7.6" fill="#bdbdbd"/><rect x="575.05" y="94.6" width="1.6" height="4.5" fill="#dedede"/><rect x="577.69" y="94.3" width="0.6" height="6.9" fill="#bdbdbd"/><rect x="577.19" y="95.2" width="1.6" height="4.6" fill="#dedede"/><rect x="579.83" y="93.3" width="0.6" height="8.7" fill="#bdbdbd"/><rect x="579.33" y="95.5" width="1.6" height="5.3" fill="#dedede"/><rect x="581.96" y="92.5" width="0.6" height="9.9" fill="#bdbdbd"/><rect x="581.46" y="93.4" width="1.6" height="5.7" fill="#dedede"/><rect x="584.10" y="91.0" width="0.6" height="9.4" fill="#bdbdbd"/><rect x="583.60" y="91.8" width="1.6" height="6.2" fill="#dedede"/><rect x="586.24" y="89.0" width="0.6" height="10.3" fill="#bdbdbd"/><rect x="585.74" y="90.7" width="1.6" height="7.3" fill="#dedede"/><rect x="588.38" y="88.7" width="0.6" height="6.7" fill="#bdbdbd"/><rect x="587.88" y="90.9" width="1.6" height="3.0" fill="#dedede"/><rect x="590.51" y="87.5" width="0.6" height="10.0" fill="#bdbdbd"/><rect x="590.01" y="90.9" width="1.6" height="4.0" fill="#dedede"/><rect x="592.65" y="91.3" width="0.6" height="6.1" fill="#bdbdbd"/><rect x="592.15" y="91.9" width="1.6" height="3.4" fill="#dedede"/><rect x="594.79" y="90.4" width="0.6" height="7.2" fill="#bdbdbd"/><rect x="594.29" y="91.0" width="1.6" height="3.6" fill="#dedede"/><rect x="596.93" y="80.5" width="0.6" height="13.1" fill="#bdbdbd"/><rect x="596.43" y="83.8" width="1.6" height="8.8" fill="#dedede"/><rect x="599.06" y="70.4" width="0.6" height="16.6" fill="#bdbdbd"/><rect x="598.56" y="72.5" width="1.6" height="12.2" fill="#dedede"/><rect x="601.20" y="62.7" width="0.6" height="14.5" fill="#bdbdbd"/><rect x="600.70" y="64.1" width="1.6" height="11.7" fill="#6e42bc"/><rect x="603.34" y="65.5" width="0.6" height="12.2" fill="#bdbdbd"/><rect x="602.84" y="68.3" width="1.6" height="6.7" fill="#6e42bc"/><rect x="605.48" y="67.0" width="0.6" height="11.2" fill="#bdbdbd"/><rect x="604.98" y="69.7" width="1.6" height="6.6" fill="#6e42bc"/><rect x="607.61" y="65.0" width="0.6" height="13.7" fill="#bdbdbd"/><rect x="607.11" y="66.2" width="1.6" height="11.7" fill="#dedede"/><rect x="609.75" y="64.2" width="0.6" height="15.3" fill="#bdbdbd"/><rect x="609.25" y="65.7" width="1.6" height="11.0" fill="#dedede"/><rect x="611.89" y="65.8" width="0.6" height="18.7" fill="#bdbdbd"/><rect x="611.39" y="68.5" width="1.6" height="14.7" fill="#6e42bc"/><rect x="614.03" y="68.5" width="0.6" height="16.5" fill="#bdbdbd"/><rect x="613.53" y="71.4" width="1.6" height="11.5" fill="#6e42bc"/><rect x="616.16" y="74.6" width="0.6" height="12.0" fill="#bdbdbd"/><rect x="615.66" y="78.0" width="1.6" height="7.4" fill="#6e42bc"/><rect x="618.30" y="78.1" width="0.6" height="10.2" fill="#bdbdbd"/><rect x="617.80" y="79.4" width="1.6" height="7.7" fill="#6e42bc"/><rect x="620.44" y="76.8" width="0.6" height="11.3" fill="#bdbdbd"/><rect x="619.94" y="79.6" width="1.6" height="7.1" fill="#dedede"/><rect x="622.58" y="75.0" width="0.6" height="12.5" fill="#bdbdbd"/><rect x="622.08" y="76.2" width="1.6" height="8.1" fill="#dedede"/><rect x="624.71" y="72.8" width="0.6" height="13.4" fill="#bdbdbd"/><rect x="624.21" y="75.3" width="1.6" height="7.5" fill="#dedede"/><rect x="626.85" y="74.6" width="0.6" height="12.9" fill="#bdbdbd"/><rect x="626.35" y="77.2" width="1.6" height="7.3" fill="#dedede"/><rect x="628.99" y="77.9" width="0.6" height="11.0" fill="#bdbdbd"/><rect x="628.49" y="80.1" width="1.6" height="7.4" fill="#dedede"/><rect x="631.13" y="78.0" width="0.6" height="9.4" fill="#bdbdbd"/><rect x="630.63" y="78.8" width="1.6" height="5.4" fill="#dedede"/><rect x="633.26" y="74.6" width="0.6" height="9.4" fill="#bdbdbd"/><rect x="632.76" y="75.4" width="1.6" height="5.3" fill="#6e42bc"/><rect x="635.40" y="73.7" width="0.6" height="7.7" fill="#bdbdbd"/><rect x="634.90" y="74.3" width="1.6" height="6.5" fill="#6e42bc"/><rect x="637.54" y="71.0" width="0.6" height="13.8" fill="#bdbdbd"/><rect x="637.04" y="73.6" width="1.6" height="8.5" fill="#dedede"/><rect x="639.68" y="72.9" width="0.6" height="10.0" fill="#bdbdbd"/><rect x="639.18" y="74.5" width="1.6" height="5.5" fill="#dedede"/><rect x="641.81" y="72.6" width="0.6" height="9.9" fill="#bdbdbd"/><rect x="641.31" y="73.3" width="1.6" height="6.1" fill="#6e42bc"/><rect x="643.95" y="72.2" width="0.6" height="7.6" fill="#bdbdbd"/><rect x="643.45" y="73.1" width="1.6" height="5.7" fill="#dedede"/><rect x="646.09" y="68.1" width="0.6" height="10.4" fill="#bdbdbd"/><rect x="645.59" y="71.2" width="1.6" height="4.5" fill="#dedede"/><rect x="648.23" y="66.3" width="0.6" height="10.3" fill="#bdbdbd"/><rect x="647.73" y="68.7" width="1.6" height="6.5" fill="#dedede"/><rect x="650.36" y="62.5" width="0.6" height="10.8" fill="#bdbdbd"/><rect x="649.86" y="65.3" width="1.6" height="7.0" fill="#dedede"/><rect x="652.50" y="68.1" width="0.6" height="11.8" fill="#bdbdbd"/><rect x="652.00" y="68.7" width="1.6" height="10.0" fill="#6e42bc"/><rect x="654.64" y="73.6" width="0.6" height="10.5" fill="#bdbdbd"/><rect x="654.14" y="75.2" width="1.6" height="7.4" fill="#6e42bc"/><rect x="656.78" y="75.9" width="0.6" height="15.8" fill="#bdbdbd"/><rect x="656.28" y="79.0" width="1.6" height="10.4" fill="#6e42bc"/><rect x="658.91" y="78.9" width="0.6" height="12.0" fill="#bdbdbd"/><rect x="658.41" y="80.7" width="1.6" height="7.4" fill="#dedede"/><rect x="661.05" y="81.1" width="0.6" height="9.2" fill="#bdbdbd"/><rect x="660.55" y="83.2" width="1.6" height="5.9" fill="#6e42bc"/><rect x="663.19" y="76.2" width="0.6" height="13.7" fill="#bdbdbd"/><rect x="662.69" y="79.2" width="1.6" height="9.8" fill="#dedede"/><rect x="665.33" y="76.3" width="0.6" height="11.9" fill="#bdbdbd"/><rect x="664.83" y="79.1" width="1.6" height="5.7" fill="#6e42bc"/><rect x="667.46" y="77.6" width="0.6" height="9.4" fill="#bdbdbd"/><rect x="666.96" y="79.6" width="1.6" height="4.6" fill="#6e42bc"/><rect x="669.60" y="76.6" width="0.6" height="10.6" fill="#bdbdbd"/><rect x="669.10" y="78.2" width="1.6" height="6.0" fill="#dedede"/><rect x="671.74" y="77.1" width="0.6" height="7.3" fill="#bdbdbd"/><rect x="671.24" y="78.5" width="1.6" height="4.8" fill="#6e42bc"/><rect x="673.88" y="76.0" width="0.6" height="8.3" fill="#bdbdbd"/><rect x="673.38" y="76.8" width="1.6" height="5.0" fill="#6e42bc"/><rect x="676.01" y="74.6" width="0.6" height="9.3" fill="#bdbdbd"/><rect x="675.51" y="77.2" width="1.6" height="3.8" fill="#dedede"/><rect x="678.15" y="73.6" width="0.6" height="8.3" fill="#bdbdbd"/><rect x="677.65" y="75.3" width="1.6" height="4.9" fill="#6e42bc"/><rect x="680.29" y="73.9" width="0.6" height="9.1" fill="#bdbdbd"/><rect x="679.79" y="77.0" width="1.6" height="5.3" fill="#dedede"/><rect x="682.43" y="75.6" width="0.6" height="9.4" fill="#bdbdbd"/><rect x="681.93" y="78.8" width="1.6" height="4.2" fill="#dedede"/><rect x="684.56" y="77.0" width="0.6" height="8.2" fill="#bdbdbd"/><rect x="684.06" y="78.2" width="1.6" height="5.1" fill="#dedede"/><rect x="686.70" y="74.2" width="0.6" height="10.2" fill="#bdbdbd"/><rect x="686.20" y="77.0" width="1.6" height="5.0" fill="#dedede"/><rect x="688.84" y="76.5" width="0.6" height="8.6" fill="#bdbdbd"/><rect x="688.34" y="77.5" width="1.6" height="4.6" fill="#dedede"/><rect x="690.98" y="78.7" width="0.6" height="8.6" fill="#bdbdbd"/><rect x="690.48" y="79.7" width="1.6" height="5.8" fill="#6e42bc"/><rect x="693.11" y="80.0" width="0.6" height="9.5" fill="#bdbdbd"/><rect x="692.61" y="80.8" width="1.6" height="6.7" fill="#6e42bc"/><rect x="695.25" y="80.4" width="0.6" height="9.2" fill="#bdbdbd"/><rect x="694.75" y="81.5" width="1.6" height="6.7" fill="#dedede"/><rect x="697.39" y="78.8" width="0.6" height="8.7" fill="#bdbdbd"/><rect x="696.89" y="79.8" width="1.6" height="6.8" fill="#dedede"/><rect x="699.53" y="67.8" width="0.6" height="10.1" fill="#bdbdbd"/><rect x="699.03" y="69.8" width="1.6" height="7.0" fill="#dedede"/><rect x="701.66" y="62.1" width="0.6" height="15.6" fill="#bdbdbd"/><rect x="701.16" y="65.6" width="1.6" height="9.5" fill="#6e42bc"/><rect x="703.80" y="71.0" width="0.6" height="9.6" fill="#bdbdbd"/><rect x="703.30" y="71.8" width="1.6" height="7.1" fill="#dedede"/><rect x="705.94" y="69.2" width="0.6" height="12.8" fill="#bdbdbd"/><rect x="705.44" y="71.9" width="1.6" height="8.3" fill="#dedede"/><rect x="708.08" y="73.0" width="0.6" height="9.5" fill="#bdbdbd"/><rect x="707.58" y="73.8" width="1.6" height="7.5" fill="#6e42bc"/><rect x="710.21" y="81.3" width="0.6" height="15.2" fill="#bdbdbd"/><rect x="709.71" y="83.0" width="1.6" height="10.6" fill="#6e42bc"/><rect x="712.35" y="81.5" width="0.6" height="14.9" fill="#bdbdbd"/><rect x="711.85" y="83.9" width="1.6" height="10.6" fill="#dedede"/><rect x="714.49" y="79.1" width="0.6" height="14.2" fill="#bdbdbd"/><rect x="713.99" y="80.8" width="1.6" height="9.7" fill="#dedede"/><rect x="716.63" y="75.9" width="0.6" height="16.1" fill="#bdbdbd"/><rect x="716.13" y="78.1" width="1.6" height="11.1" fill="#6e42bc"/><rect x="718.76" y="76.8" width="0.6" height="12.4" fill="#bdbdbd"/><rect x="718.26" y="79.5" width="1.6" height="6.6" fill="#6e42bc"/><rect x="720.90" y="77.2" width="0.6" height="12.5" fill="#bdbdbd"/><rect x="720.40" y="80.3" width="1.6" height="6.9" fill="#dedede"/><rect x="723.04" y="80.3" width="0.6" height="11.0" fill="#bdbdbd"/><rect x="722.54" y="81.7" width="1.6" height="7.2" fill="#6e42bc"/><rect x="725.18" y="81.0" width="0.6" height="11.9" fill="#bdbdbd"/><rect x="724.68" y="83.9" width="1.6" height="6.4" fill="#6e42bc"/><rect x="727.31" y="83.0" width="0.6" height="12.9" fill="#bdbdbd"/><rect x="726.81" y="84.8" width="1.6" height="9.2" fill="#6e42bc"/><rect x="729.45" y="86.7" width="0.6" height="14.9" fill="#bdbdbd"/><rect x="728.95" y="89.3" width="1.6" height="9.1" fill="#6e42bc"/><rect x="731.59" y="91.5" width="0.6" height="11.6" fill="#bdbdbd"/><rect x="731.09" y="94.3" width="1.6" height="7.1" fill="#6e42bc"/><rect x="733.73" y="95.9" width="0.6" height="10.9" fill="#bdbdbd"/><rect x="733.23" y="96.5" width="1.6" height="8.1" fill="#6e42bc"/><rect x="735.86" y="92.4" width="0.6" height="11.9" fill="#bdbdbd"/><rect x="735.36" y="95.7" width="1.6" height="6.5" fill="#dedede"/><rect x="738.00" y="89.9" width="0.6" height="9.3" fill="#bdbdbd"/><rect x="737.50" y="92.0" width="1.6" height="4.5" fill="#dedede"/><rect x="740.14" y="87.1" width="0.6" height="11.1" fill="#bdbdbd"/><rect x="739.64" y="90.1" width="1.6" height="6.1" fill="#dedede"/><rect x="742.28" y="88.7" width="0.6" height="9.2" fill="#bdbdbd"/><rect x="741.78" y="89.8" width="1.6" height="5.5" fill="#dedede"/><rect x="744.41" y="88.0" width="0.6" height="8.9" fill="#bdbdbd"/><rect x="743.91" y="88.9" width="1.6" height="4.6" fill="#dedede"/><rect x="746.55" y="86.0" width="0.6" height="7.8" fill="#bdbdbd"/><rect x="746.05" y="87.3" width="1.6" height="4.8" fill="#dedede"/><rect x="748.69" y="84.5" width="0.6" height="9.5" fill="#bdbdbd"/><rect x="748.19" y="86.3" width="1.6" height="5.2" fill="#dedede"/><rect x="750.83" y="77.0" width="0.6" height="13.2" fill="#bdbdbd"/><rect x="750.33" y="78.1" width="1.6" height="9.3" fill="#dedede"/><rect x="752.96" y="71.1" width="0.6" height="18.7" fill="#bdbdbd"/><rect x="752.46" y="72.3" width="1.6" height="14.6" fill="#dedede"/><rect x="755.10" y="73.1" width="0.6" height="16.5" fill="#bdbdbd"/><rect x="754.60" y="74.0" width="1.6" height="12.8" fill="#6e42bc"/><rect x="757.24" y="80.5" width="0.6" height="20.8" fill="#bdbdbd"/><rect x="756.74" y="82.4" width="1.6" height="16.7" fill="#6e42bc"/><rect x="759.38" y="92.5" width="0.6" height="12.6" fill="#bdbdbd"/><rect x="758.88" y="94.1" width="1.6" height="8.6" fill="#6e42bc"/><rect x="761.51" y="92.6" width="0.6" height="11.0" fill="#bdbdbd"/><rect x="761.01" y="94.5" width="1.6" height="7.7" fill="#dedede"/><rect x="763.65" y="88.2" width="0.6" height="11.7" fill="#bdbdbd"/><rect x="763.15" y="91.2" width="1.6" height="7.2" fill="#dedede"/><rect x="765.79" y="85.1" width="0.6" height="13.0" fill="#bdbdbd"/><rect x="765.29" y="86.7" width="1.6" height="10.2" fill="#dedede"/><rect x="767.93" y="76.0" width="0.6" height="15.2" fill="#bdbdbd"/><rect x="767.43" y="76.5" width="1.6" height="12.1" fill="#dedede"/><rect x="770.06" y="73.1" width="0.6" height="13.0" fill="#bdbdbd"/><rect x="769.56" y="74.5" width="1.6" height="9.6" fill="#6e42bc"/><rect x="772.20" y="80.7" width="0.6" height="14.7" fill="#bdbdbd"/><rect x="771.70" y="83.2" width="1.6" height="10.6" fill="#6e42bc"/><rect x="774.34" y="89.1" width="0.6" height="15.3" fill="#bdbdbd"/><rect x="773.84" y="89.7" width="1.6" height="11.6" fill="#6e42bc"/><rect x="776.48" y="94.4" width="0.6" height="12.8" fill="#bdbdbd"/><rect x="775.98" y="95.3" width="1.6" height="8.9" fill="#6e42bc"/><rect x="778.61" y="97.8" width="0.6" height="9.7" fill="#bdbdbd"/><rect x="778.11" y="98.4" width="1.6" height="5.8" fill="#6e42bc"/><rect x="780.75" y="99.0" width="0.6" height="7.2" fill="#bdbdbd"/><rect x="780.25" y="99.8" width="1.6" height="5.5" fill="#dedede"/><rect x="782.89" y="101.1" width="0.6" height="7.9" fill="#bdbdbd"/><rect x="782.39" y="102.6" width="1.6" height="5.4" fill="#6e42bc"/><rect x="785.03" y="101.3" width="0.6" height="10.8" fill="#bdbdbd"/><rect x="784.53" y="102.3" width="1.6" height="6.6" fill="#dedede"/><rect x="787.16" y="95.6" width="0.6" height="12.8" fill="#bdbdbd"/><rect x="786.66" y="98.1" width="1.6" height="7.2" fill="#dedede"/><rect x="789.30" y="94.4" width="0.6" height="10.2" fill="#bdbdbd"/><rect x="788.80" y="95.5" width="1.6" height="6.5" fill="#dedede"/><rect x="791.44" y="94.6" width="0.6" height="9.0" fill="#bdbdbd"/><rect x="790.94" y="96.4" width="1.6" height="4.1" fill="#6e42bc"/><rect x="793.58" y="96.4" width="0.6" height="6.0" fill="#bdbdbd"/><rect x="793.08" y="97.6" width="1.6" height="3.9" fill="#6e42bc"/><rect x="795.71" y="96.1" width="0.6" height="7.0" fill="#bdbdbd"/><rect x="795.21" y="98.0" width="1.6" height="4.2" fill="#dedede"/><rect x="797.85" y="96.3" width="0.6" height="10.1" fill="#bdbdbd"/><rect x="797.35" y="98.4" width="1.6" height="4.9" fill="#dedede"/><rect x="799.99" y="98.1" width="0.6" height="8.9" fill="#bdbdbd"/><rect x="799.49" y="100.1" width="1.6" height="4.8" fill="#6e42bc"/><rect x="802.13" y="100.3" width="0.6" height="11.1" fill="#bdbdbd"/><rect x="801.63" y="102.0" width="1.6" height="7.8" fill="#6e42bc"/><rect x="804.26" y="103.8" width="0.6" height="15.3" fill="#bdbdbd"/><rect x="803.76" y="106.2" width="1.6" height="10.5" fill="#6e42bc"/><rect x="806.40" y="112.5" width="0.6" height="13.4" fill="#bdbdbd"/><rect x="805.90" y="115.1" width="1.6" height="7.6" fill="#6e42bc"/><rect x="808.54" y="115.5" width="0.6" height="11.7" fill="#bdbdbd"/><rect x="808.04" y="117.6" width="1.6" height="7.7" fill="#6e42bc"/><rect x="810.68" y="111.6" width="0.6" height="13.6" fill="#bdbdbd"/><rect x="810.18" y="114.3" width="1.6" height="8.5" fill="#dedede"/><rect x="812.81" y="109.8" width="0.6" height="11.4" fill="#bdbdbd"/><rect x="812.31" y="111.4" width="1.6" height="7.8" fill="#dedede"/><rect x="814.95" y="111.2" width="0.6" height="11.9" fill="#bdbdbd"/><rect x="814.45" y="112.4" width="1.6" height="8.9" fill="#6e42bc"/><rect x="817.09" y="117.6" width="0.6" height="11.2" fill="#bdbdbd"/><rect x="816.59" y="120.6" width="1.6" height="6.8" fill="#6e42bc"/><rect x="819.23" y="122.4" width="0.6" height="10.4" fill="#bdbdbd"/><rect x="818.73" y="124.4" width="1.6" height="7.0" fill="#6e42bc"/><rect x="821.36" y="125.9" width="0.6" height="11.7" fill="#bdbdbd"/><rect x="820.86" y="128.3" width="1.6" height="6.4" fill="#6e42bc"/><rect x="823.50" y="128.0" width="0.6" height="10.4" fill="#bdbdbd"/><rect x="823.00" y="129.4" width="1.6" height="6.7" fill="#dedede"/><rect x="825.64" y="129.8" width="0.6" height="11.6" fill="#bdbdbd"/><rect x="825.14" y="130.4" width="1.6" height="8.3" fill="#6e42bc"/><rect x="827.78" y="134.4" width="0.6" height="9.5" fill="#bdbdbd"/><rect x="827.28" y="135.1" width="1.6" height="7.4" fill="#6e42bc"/><rect x="829.91" y="130.8" width="0.6" height="10.5" fill="#bdbdbd"/><rect x="829.41" y="134.1" width="1.6" height="5.0" fill="#dedede"/><rect x="832.05" y="133.0" width="0.6" height="11.4" fill="#bdbdbd"/><rect x="831.55" y="136.2" width="1.6" height="5.8" fill="#6e42bc"/><rect x="15.70" y="93.6" width="0.6" height="5.9" fill="#bdbdbd"/><rect x="35.70" y="110.4" width="0.6" height="9.6" fill="#bdbdbd"/><rect x="47.70" y="64.8" width="0.6" height="3.0" fill="#bdbdbd"/><rect x="152.70" y="107.5" width="0.6" height="23.5" fill="#bdbdbd"/><rect x="219.70" y="79.7" width="0.6" height="11.9" fill="#bdbdbd"/><rect x="374.70" y="27.8" width="0.6" height="13.9" fill="#bdbdbd"/><rect x="460.10" y="21.8" width="0.6" height="11.9" fill="#bdbdbd"/><rect x="579.20" y="101.5" width="0.6" height="9.9" fill="#bdbdbd"/><rect x="658.70" y="89.6" width="0.6" height="5.0" fill="#bdbdbd"/><rect x="733.00" y="103.5" width="0.6" height="9.9" fill="#bdbdbd"/><rect x="784.70" y="108.6" width="0.6" height="10.9" fill="#bdbdbd"/><rect x="823.00" y="136.4" width="0.6" height="5.6" fill="#bdbdbd"/><rect x="997" y="18.8" width="2" height="1" fill="#bdbdbd"/><rect x="997" y="36.4" width="2" height="1" fill="#bdbdbd"/><rect x="997" y="54.0" width="2" height="1" fill="#bdbdbd"/><rect x="997" y="71.6" width="2" height="1" fill="#bdbdbd"/><rect x="997" y="89.2" width="2" height="1" fill="#bdbdbd"/><rect x="997" y="106.8" width="2" height="1" fill="#bdbdbd"/><rect x="997" y="124.4" width="2" height="1" fill="#bdbdbd"/><rect x="997" y="142.0" width="2" height="1" fill="#bdbdbd"/><rect x="2.3" y="161" width="1" height="2.5" fill="#bdbdbd"/><rect x="36.5" y="161" width="1" height="2.5" fill="#bdbdbd"/><rect x="70.6" y="161" width="1" height="2.5" fill="#bdbdbd"/><rect x="104.8" y="161" width="1" height="2.5" fill="#bdbdbd"/><rect x="138.9" y="161" width="1" height="2.5" fill="#bdbdbd"/><rect x="173.1" y="161" width="1" height="2.5" fill="#bdbdbd"/><rect x="207.3" y="161" width="1" height="2.5" fill="#bdbdbd"/><rect x="241.4" y="161" width="1" height="2.5" fill="#bdbdbd"/><rect x="275.6" y="161" width="1" height="2.5" fill="#bdbdbd"/><rect x="309.7" y="161" width="1" height="2.5" fill="#bdbdbd"/><rect x="343.9" y="161" width="1" height="2.5" fill="#bdbdbd"/><rect x="378.1" y="161" width="1" height="2.5" fill="#bdbdbd"/><rect x="412.2" y="161" width="1" height="2.5" fill="#bdbdbd"/><rect x="446.4" y="161" width="1" height="2.5" fill="#bdbdbd"/><rect x="480.5" y="161" width="1" height="2.5" fill="#bdbdbd"/><rect x="514.7" y="161" width="1" height="2.5" fill="#bdbdbd"/><rect x="548.9" y="161" width="1" height="2.5" fill="#bdbdbd"/><rect x="583.0" y="161" width="1" height="2.5" fill="#bdbdbd"/><rect x="617.2" y="161" width="1" height="2.5" fill="#bdbdbd"/><rect x="651.3" y="161" width="1" height="2.5" fill="#bdbdbd"/><rect x="685.5" y="161" width="1" height="2.5" fill="#bdbdbd"/><rect x="719.7" y="161" width="1" height="2.5" fill="#bdbdbd"/><rect x="753.8" y="161" width="1" height="2.5" fill="#bdbdbd"/><rect x="788.0" y="161" width="1" height="2.5" fill="#bdbdbd"/><rect x="822.1" y="161" width="1" height="2.5" fill="#bdbdbd"/><rect x="998.3" y="154.3" width="21.2" height="5.6" fill="#f4f4f4"/></svg><div class="t" style="left:5px;top:3.10px;font-size:5.0px;color:#e0e0e0;font-family:'Liberation Sans', sans-serif;">GBPCHF,H1&nbsp; 1.25847 1.25847 1.25847 1.25847</div><div class="t" style="left:1000px;top:16.86px;font-size:4.9px;color:#e0e0e0;font-family:'Liberation Sans', sans-serif;">1.28030</div><div class="t" style="left:1000px;top:34.46px;font-size:4.9px;color:#e0e0e0;font-family:'Liberation Sans', sans-serif;">1.27750</div><div class="t" style="left:1000px;top:52.06px;font-size:4.9px;color:#e0e0e0;font-family:'Liberation Sans', sans-serif;">1.27470</div><div class="t" style="left:1000px;top:69.66px;font-size:4.9px;color:#e0e0e0;font-family:'Liberation Sans', sans-serif;">1.27195</div><div class="t" style="left:1000px;top:87.26px;font-size:4.9px;color:#e0e0e0;font-family:'Liberation Sans', sans-serif;">1.26915</div><div class="t" style="left:1000px;top:104.86px;font-size:4.9px;color:#e0e0e0;font-family:'Liberation Sans', sans-serif;">1.26635</div><div class="t" style="left:1000px;top:122.46px;font-size:4.9px;color:#e0e0e0;font-family:'Liberation Sans', sans-serif;">1.26355</div><div class="t" style="left:1000px;top:140.06px;font-size:4.9px;color:#e0e0e0;font-family:'Liberation Sans', sans-serif;">1.26080</div><div class="t" style="left:1000px;top:154.06px;font-size:4.9px;color:#000;font-family:'Liberation Sans', sans-serif;">1.25847</div><div class="t" style="left:2.3px;top:163.30px;font-size:5.0px;color:#e8e8e8;font-family:'Liberation Sans', sans-serif;">8 Apr 2021</div><div class="t" style="left:36.459999999999994px;top:163.30px;font-size:5.0px;color:#e8e8e8;font-family:'Liberation Sans', sans-serif;">9 Apr 10:00</div><div class="t" style="left:70.61999999999999px;top:163.30px;font-size:5.0px;color:#e8e8e8;font-family:'Liberation Sans', sans-serif;">12 Apr 02:00</div><div class="t" style="left:104.77999999999999px;top:163.30px;font-size:5.0px;color:#e8e8e8;font-family:'Liberation Sans', sans-serif;">12 Apr 18:00</div><div class="t" style="left:138.94px;top:163.30px;font-size:5.0px;color:#e8e8e8;font-family:'Liberation Sans', sans-serif;">13 Apr 10:00</div><div class="t" style="left:173.1px;top:163.30px;font-size:5.0px;color:#e8e8e8;font-family:'Liberation Sans', sans-serif;">14 Apr 02:00</div><div class="t" style="left:207.26px;top:163.30px;font-size:5.0px;color:#e8e8e8;font-family:'Liberation Sans', sans-serif;">14 Apr 18:00</div><div class="t" style="left:241.42px;top:163.30px;font-size:5.0px;color:#e8e8e8;font-family:'Liberation Sans', sans-serif;">15 Apr 10:00</div><div class="t" style="left:275.58px;top:163.30px;font-size:5.0px;color:#e8e8e8;font-family:'Liberation Sans', sans-serif;">16 Apr 02:00</div><div class="t" style="left:309.73999999999995px;top:163.30px;font-size:5.0px;color:#e8e8e8;font-family:'Liberation Sans', sans-serif;">16 Apr 18:00</div><div class="t" style="left:343.9px;top:163.30px;font-size:5.0px;color:#e8e8e8;font-family:'Liberation Sans', sans-serif;">19 Apr 10:00</div><div class="t" style="left:378.06px;top:163.30px;font-size:5.0px;color:#e8e8e8;font-family:'Liberation Sans', sans-serif;">20 Apr 02:00</div><div class="t" style="left:412.21999999999997px;top:163.30px;font-size:5.0px;color:#e8e8e8;font-family:'Liberation Sans', sans-serif;">20 Apr 18:00</div><div class="t" style="left:446.37999999999994px;top:163.30px;font-size:5.0px;color:#e8e8e8;font-family:'Liberation Sans', sans-serif;">21 Apr 10:00</div><div class="t" style="left:480.53999999999996px;top:163.30px;font-size:5.0px;color:#e8e8e8;font-family:'Liberation Sans', sans-serif;">22 Apr 02:00</div><div class="t" style="left:514.6999999999999px;top:163.30px;font-size:5.0px;color:#e8e8e8;font-family:'Liberation Sans', sans-serif;">22 Apr 18:00</div><div class="t" style="left:548.8599999999999px;top:163.30px;font-size:5.0px;color:#e8e8e8;font-family:'Liberation Sans', sans-serif;">23 Apr 10:00</div><div class="t" style="left:583.0199999999999px;top:163.30px;font-size:5.0px;color:#e8e8e8;font-family:'Liberation Sans', sans-serif;">26 Apr 02:00</div><div class="t" style="left:617.1799999999998px;top:163.30px;font-size:5.0px;color:#e8e8e8;font-family:'Liberation Sans', sans-serif;">26 Apr 18:00</div><div class="t" style="left:651.3399999999999px;top:163.30px;font-size:5.0px;color:#e8e8e8;font-family:'Liberation Sans', sans-serif;">27 Apr 10:00</div><div class="t" style="left:685.4999999999999px;top:163.30px;font-size:5.0px;color:#e8e8e8;font-family:'Liberation Sans', sans-serif;">28 Apr 02:00</div><div class="t" style="left:719.6599999999999px;top:163.30px;font-size:5.0px;color:#e8e8e8;font-family:'Liberation Sans', sans-serif;">28 Apr 18:00</div><div class="t" style="left:753.8199999999999px;top:163.30px;font-size:5.0px;color:#e8e8e8;font-family:'Liberation Sans', sans-serif;">29 Apr 10:00</div><div class="t" style="left:787.9799999999999px;top:163.30px;font-size:5.0px;color:#e8e8e8;font-family:'Liberation Sans', sans-serif;">30 Apr 02:00</div><div class="t" style="left:822.1399999999999px;top:163.30px;font-size:5.0px;color:#e8e8e8;font-family:'Liberation Sans', sans-serif;">30 Apr 18:00</div><div class="t" style="left:808.5px;top:17.08px;font-size:6.2px;color:#d8d8d8;font-family:'Liberation Mono', monospace;">Verified Supply, Retests=2</div><div class="t" style="left:808.5px;top:59.68px;font-size:6.2px;color:#d8d8d8;font-family:'Liberation Mono', monospace;">Proven Supply, Retests=12</div><div class="t" style="left:808.5px;top:96.28px;font-size:6.2px;color:#d8d8d8;font-family:'Liberation Mono', monospace;">Weak Supply</div><div style="position:absolute;left:0;top:172px;width:1024px;height:14px;background:#f0f0f0"></div><div style="position:absolute;left:0;top:172px;width:1024px;height:2px;background:#c9c9c9"></div><div class="t" style="left:9px;top:175.18px;font-size:6.7px;color:#585858;font-family:'Liberation Sans', sans-serif;transform:scaleX(0.85);transform-origin:0 50%;">GBPUSD,H1</div><div style="position:absolute;left:47.5px;top:175px;width:1px;height:8px;background:#c4c4c4"></div><div class="t" style="left:54px;top:175.18px;font-size:6.7px;color:#585858;font-family:'Liberation Sans', sans-serif;transform:scaleX(0.85);transform-origin:0 50%;">GBPCHF,H1</div><div style="position:absolute;left:92.5px;top:175px;width:1px;height:8px;background:#c4c4c4"></div><div class="t" style="left:99px;top:175.18px;font-size:6.7px;color:#585858;font-family:'Liberation Sans', sans-serif;transform:scaleX(0.85);transform-origin:0 50%;">GBPJPY,H1</div><div style="position:absolute;left:135px;top:175px;width:1px;height:8px;background:#c4c4c4"></div><div class="t" style="left:142px;top:175.18px;font-size:6.7px;color:#585858;font-family:'Liberation Sans', sans-serif;transform:scaleX(0.85);transform-origin:0 50%;">GBPAUD,H1</div><div style="position:absolute;left:182.5px;top:175px;width:1px;height:8px;background:#c4c4c4"></div><div class="t" style="left:189px;top:175.18px;font-size:6.7px;color:#585858;font-family:'Liberation Sans', sans-serif;transform:scaleX(0.85);transform-origin:0 50%;">GBPCAD,H1</div><div style="position:absolute;left:229.5px;top:175px;width:1px;height:8px;background:#c4c4c4"></div><div class="t" style="left:236px;top:175.18px;font-size:6.7px;color:#585858;font-family:'Liberation Sans', sans-serif;transform:scaleX(0.85);transform-origin:0 50%;">GBPNZD,H1</div><div style="position:absolute;left:275px;top:175px;width:1px;height:8px;background:#c4c4c4"></div><div class="t" style="left:281px;top:175.18px;font-size:6.7px;color:#585858;font-family:'Liberation Sans', sans-serif;transform:scaleX(0.85);transform-origin:0 50%;">EURAUD,H1</div><div style="position:absolute;left:321.5px;top:175px;width:1px;height:8px;background:#c4c4c4"></div><div class="t" style="left:326.5px;top:175.18px;font-size:6.7px;color:#585858;font-family:'Liberation Sans', sans-serif;transform:scaleX(0.85);transform-origin:0 50%;">EURAUD,H1</div><div style="position:absolute;left:366px;top:175px;width:1px;height:8px;background:#c4c4c4"></div><div class="t" style="left:371.5px;top:175.18px;font-size:6.7px;color:#585858;font-family:'Liberation Sans', sans-serif;transform:scaleX(0.85);transform-origin:0 50%;">EURNZD,H1</div><div style="position:absolute;left:411.5px;top:175px;width:1px;height:8px;background:#c4c4c4"></div><div class="t" style="left:416px;top:175.18px;font-size:6.7px;color:#585858;font-family:'Liberation Sans', sans-serif;transform:scaleX(0.85);transform-origin:0 50%;">EURNZD,H1</div><div style="position:absolute;left:456px;top:175px;width:1px;height:8px;background:#c4c4c4"></div><div class="t" style="left:461px;top:175.18px;font-size:6.7px;color:#585858;font-family:'Liberation Sans', sans-serif;transform:scaleX(0.85);transform-origin:0 50%;">AAPL_us,Daily</div><div style="position:absolute;left:507px;top:175px;width:1px;height:8px;background:#c4c4c4"></div><div class="t" style="left:514px;top:175.18px;font-size:6.7px;color:#585858;font-family:'Liberation Sans', sans-serif;transform:scaleX(0.85);transform-origin:0 50%;">GBPUSD,Monthly</div><div style="position:absolute;left:569.5px;top:175px;width:1px;height:8px;background:#c4c4c4"></div><div class="t" style="left:574.5px;top:175.18px;font-size:6.7px;color:#585858;font-family:'Liberation Sans', sans-serif;transform:scaleX(0.85);transform-origin:0 50%;">BTCUSD,Daily</div><div style="position:absolute;left:621px;top:175px;width:1px;height:8px;background:#c4c4c4"></div><div class="t" style="left:626px;top:175.18px;font-size:6.7px;color:#585858;font-family:'Liberation Sans', sans-serif;transform:scaleX(0.85);transform-origin:0 50%;">ETHUSD,Daily</div><div style="position:absolute;left:671.5px;top:175px;width:1px;height:8px;background:#c4c4c4"></div><div class="t" style="left:677px;top:175.18px;font-size:6.7px;color:#585858;font-family:'Liberation Sans', sans-serif;transform:scaleX(0.85);transform-origin:0 50%;">GBPCHF,Daily</div><div style="position:absolute;left:723px;top:175px;width:1px;height:8px;background:#c4c4c4"></div><div class="t" style="left:728px;top:175.18px;font-size:6.7px;color:#585858;font-family:'Liberation Sans', sans-serif;transform:scaleX(0.85);transform-origin:0 50%;">USTECHIndex,H1</div><div style="position:absolute;left:783px;top:175px;width:1px;height:8px;background:#c4c4c4"></div><div class="t" style="left:789px;top:175.18px;font-size:6.7px;color:#585858;font-family:'Liberation Sans', sans-serif;transform:scaleX(0.85);transform-origin:0 50%;">GBPNZD,M15</div><div style="position:absolute;left:834px;top:175px;width:1px;height:8px;background:#c4c4c4"></div><div class="t" style="left:840px;top:175.18px;font-size:6.7px;color:#585858;font-family:'Liberation Sans', sans-serif;transform:scaleX(0.85);transform-origin:0 50%;">GBPJPY,Monthly</div><div style="position:absolute;left:893px;top:175px;width:1px;height:8px;background:#c4c4c4"></div><div class="t" style="left:900px;top:175.18px;font-size:6.7px;color:#585858;font-family:'Liberation Sans', sans-serif;transform:scaleX(0.85);transform-origin:0 50%;">GBPCHF,H1 (visual)</div><div style="position:absolute;left:962px;top:175px;width:1px;height:8px;background:#c4c4c4"></div><div class="t" style="left:968px;top:175.18px;font-size:6.7px;color:#585858;font-family:'Liberation Sans', sans-serif;transform:scaleX(0.85);transform-origin:0 50%;">GBPCHF,H1</div><div style="position:absolute;left:1002px;top:174px;width:14px;height:10px;background:#f0f0f0"></div><svg width="24" height="10" style="position:absolute;left:1000px;top:174px"><path d="M5.5 3.5 L3.8 5 L5.5 6.5 Z M7.6 3.5 L9.3 5 L7.6 6.5 Z" fill="#b0b0b0"/><path d="M17 3.2 L19.3 5 L17 6.8 Z" fill="#101010"/></svg><div style="position:absolute;left:0;top:184px;width:1022px;height:293px;background:#fdfdfd"></div><div style="position:absolute;left:0;top:186px;width:1022px;height:1px;background:#d0d0d0"></div><div style="position:absolute;left:0;top:191.5px;width:8.5px;height:297px;background:#dfe7f2"></div><div style="position:absolute;left:8.5px;top:186px;width:1px;height:303px;background:#c8ccd2"></div><svg width="6" height="6" style="position:absolute;left:1.2px;top:186.6px"><path d="M1.6 1.6 L4.3 4.3 M4.3 1.6 L1.6 4.3" stroke="#202020" stroke-width="1.1"/></svg><div style="position:absolute;left:10.2px;top:189px;width:988.8px;height:280px;background:#fff;border:1px solid #555;box-sizing:border-box"></div><svg width="1024" height="504" style="position:absolute;left:0;top:0"><line x1="28.7" y1="190" x2="28.7" y2="467" stroke="#e0e0e0" stroke-width="0.6" stroke-dasharray="1.5 1.5"/><line x1="45.7" y1="190" x2="45.7" y2="467" stroke="#e0e0e0" stroke-width="0.6" stroke-dasharray="1.5 1.5"/><line x1="62.8" y1="190" x2="62.8" y2="467" stroke="#e0e0e0" stroke-width="0.6" stroke-dasharray="1.5 1.5"/><line x1="79.9" y1="190" x2="79.9" y2="467" stroke="#e0e0e0" stroke-width="0.6" stroke-dasharray="1.5 1.5"/><line x1="96.9" y1="190" x2="96.9" y2="467" stroke="#e0e0e0" stroke-width="0.6" stroke-dasharray="1.5 1.5"/><line x1="114.0" y1="190" x2="114.0" y2="467" stroke="#e0e0e0" stroke-width="0.6" stroke-dasharray="1.5 1.5"/><line x1="131.1" y1="190" x2="131.1" y2="467" stroke="#e0e0e0" stroke-width="0.6" stroke-dasharray="1.5 1.5"/><line x1="148.2" y1="190" x2="148.2" y2="467" stroke="#e0e0e0" stroke-width="0.6" stroke-dasharray="1.5 1.5"/><line x1="165.2" y1="190" x2="165.2" y2="467" stroke="#e0e0e0" stroke-width="0.6" stroke-dasharray="1.5 1.5"/><line x1="182.3" y1="190" x2="182.3" y2="467" stroke="#e0e0e0" stroke-width="0.6" stroke-dasharray="1.5 1.5"/><line x1="199.4" y1="190" x2="199.4" y2="467" stroke="#e0e0e0" stroke-width="0.6" stroke-dasharray="1.5 1.5"/><line x1="216.4" y1="190" x2="216.4" y2="467" stroke="#e0e0e0" stroke-width="0.6" stroke-dasharray="1.5 1.5"/><line x1="233.5" y1="190" x2="233.5" y2="467" stroke="#e0e0e0" stroke-width="0.6" stroke-dasharray="1.5 1.5"/><line x1="250.6" y1="190" x2="250.6" y2="467" stroke="#e0e0e0" stroke-width="0.6" stroke-dasharray="1.5 1.5"/><line x1="267.7" y1="190" x2="267.7" y2="467" stroke="#e0e0e0" stroke-width="0.6" stroke-dasharray="1.5 1.5"/><line x1="284.7" y1="190" x2="284.7" y2="467" stroke="#e0e0e0" stroke-width="0.6" stroke-dasharray="1.5 1.5"/><line x1="301.8" y1="190" x2="301.8" y2="467" stroke="#e0e0e0" stroke-width="0.6" stroke-dasharray="1.5 1.5"/><line x1="318.9" y1="190" x2="318.9" y2="467" stroke="#e0e0e0" stroke-width="0.6" stroke-dasharray="1.5 1.5"/><line x1="335.9" y1="190" x2="335.9" y2="467" stroke="#e0e0e0" stroke-width="0.6" stroke-dasharray="1.5 1.5"/><line x1="353.0" y1="190" x2="353.0" y2="467" stroke="#e0e0e0" stroke-width="0.6" stroke-dasharray="1.5 1.5"/><line x1="370.1" y1="190" x2="370.1" y2="467" stroke="#e0e0e0" stroke-width="0.6" stroke-dasharray="1.5 1.5"/><line x1="387.1" y1="190" x2="387.1" y2="467" stroke="#e0e0e0" stroke-width="0.6" stroke-dasharray="1.5 1.5"/><line x1="404.2" y1="190" x2="404.2" y2="467" stroke="#e0e0e0" stroke-width="0.6" stroke-dasharray="1.5 1.5"/><line x1="421.3" y1="190" x2="421.3" y2="467" stroke="#e0e0e0" stroke-width="0.6" stroke-dasharray="1.5 1.5"/><line x1="438.4" y1="190" x2="438.4" y2="467" stroke="#e0e0e0" stroke-width="0.6" stroke-dasharray="1.5 1.5"/><line x1="455.4" y1="190" x2="455.4" y2="467" stroke="#e0e0e0" stroke-width="0.6" stroke-dasharray="1.5 1.5"/><line x1="472.5" y1="190" x2="472.5" y2="467" stroke="#e0e0e0" stroke-width="0.6" stroke-dasharray="1.5 1.5"/><line x1="489.6" y1="190" x2="489.6" y2="467" stroke="#e0e0e0" stroke-width="0.6" stroke-dasharray="1.5 1.5"/><line x1="506.6" y1="190" x2="506.6" y2="467" stroke="#e0e0e0" stroke-width="0.6" stroke-dasharray="1.5 1.5"/><line x1="523.7" y1="190" x2="523.7" y2="467" stroke="#e0e0e0" stroke-width="0.6" stroke-dasharray="1.5 1.5"/><line x1="540.8" y1="190" x2="540.8" y2="467" stroke="#e0e0e0" stroke-width="0.6" stroke-dasharray="1.5 1.5"/><line x1="557.8" y1="190" x2="557.8" y2="467" stroke="#e0e0e0" stroke-width="0.6" stroke-dasharray="1.5 1.5"/><line x1="574.9" y1="190" x2="574.9" y2="467" stroke="#e0e0e0" stroke-width="0.6" stroke-dasharray="1.5 1.5"/><line x1="592.0" y1="190" x2="592.0" y2="467" stroke="#e0e0e0" stroke-width="0.6" stroke-dasharray="1.5 1.5"/><line x1="609.1" y1="190" x2="609.1" y2="467" stroke="#e0e0e0" stroke-width="0.6" stroke-dasharray="1.5 1.5"/><line x1="626.1" y1="190" x2="626.1" y2="467" stroke="#e0e0e0" stroke-width="0.6" stroke-dasharray="1.5 1.5"/><line x1="643.2" y1="190" x2="643.2" y2="467" stroke="#e0e0e0" stroke-width="0.6" stroke-dasharray="1.5 1.5"/><line x1="660.3" y1="190" x2="660.3" y2="467" stroke="#e0e0e0" stroke-width="0.6" stroke-dasharray="1.5 1.5"/><line x1="677.3" y1="190" x2="677.3" y2="467" stroke="#e0e0e0" stroke-width="0.6" stroke-dasharray="1.5 1.5"/><line x1="694.4" y1="190" x2="694.4" y2="467" stroke="#e0e0e0" stroke-width="0.6" stroke-dasharray="1.5 1.5"/><line x1="711.5" y1="190" x2="711.5" y2="467" stroke="#e0e0e0" stroke-width="0.6" stroke-dasharray="1.5 1.5"/><line x1="728.5" y1="190" x2="728.5" y2="467" stroke="#e0e0e0" stroke-width="0.6" stroke-dasharray="1.5 1.5"/><line x1="745.6" y1="190" x2="745.6" y2="467" stroke="#e0e0e0" stroke-width="0.6" stroke-dasharray="1.5 1.5"/><line x1="762.7" y1="190" x2="762.7" y2="467" stroke="#e0e0e0" stroke-width="0.6" stroke-dasharray="1.5 1.5"/><line x1="779.8" y1="190" x2="779.8" y2="467" stroke="#e0e0e0" stroke-width="0.6" stroke-dasharray="1.5 1.5"/><line x1="796.8" y1="190" x2="796.8" y2="467" stroke="#e0e0e0" stroke-width="0.6" stroke-dasharray="1.5 1.5"/><line x1="813.9" y1="190" x2="813.9" y2="467" stroke="#e0e0e0" stroke-width="0.6" stroke-dasharray="1.5 1.5"/><line x1="831.0" y1="190" x2="831.0" y2="467" stroke="#e0e0e0" stroke-width="0.6" stroke-dasharray="1.5 1.5"/><line x1="848.0" y1="190" x2="848.0" y2="467" stroke="#e0e0e0" stroke-width="0.6" stroke-dasharray="1.5 1.5"/><line x1="865.1" y1="190" x2="865.1" y2="467" stroke="#e0e0e0" stroke-width="0.6" stroke-dasharray="1.5 1.5"/><line x1="882.2" y1="190" x2="882.2" y2="467" stroke="#e0e0e0" stroke-width="0.6" stroke-dasharray="1.5 1.5"/><line x1="899.2" y1="190" x2="899.2" y2="467" stroke="#e0e0e0" stroke-width="0.6" stroke-dasharray="1.5 1.5"/><line x1="916.3" y1="190" x2="916.3" y2="467" stroke="#e0e0e0" stroke-width="0.6" stroke-dasharray="1.5 1.5"/><line x1="933.4" y1="190" x2="933.4" y2="467" stroke="#e0e0e0" stroke-width="0.6" stroke-dasharray="1.5 1.5"/><line x1="950.5" y1="190" x2="950.5" y2="467" stroke="#e0e0e0" stroke-width="0.6" stroke-dasharray="1.5 1.5"/><line x1="967.5" y1="190" x2="967.5" y2="467" stroke="#e0e0e0" stroke-width="0.6" stroke-dasharray="1.5 1.5"/><line x1="984.6" y1="190" x2="984.6" y2="467" stroke="#e0e0e0" stroke-width="0.6" stroke-dasharray="1.5 1.5"/><line x1="12" y1="195.0" x2="997" y2="195.0" stroke="#e0e0e0" stroke-width="0.6" stroke-dasharray="1.5 1.5"/><line x1="12" y1="212.1" x2="997" y2="212.1" stroke="#e0e0e0" stroke-width="0.6" stroke-dasharray="1.5 1.5"/><line x1="12" y1="229.1" x2="997" y2="229.1" stroke="#e0e0e0" stroke-width="0.6" stroke-dasharray="1.5 1.5"/><line x1="12" y1="246.2" x2="997" y2="246.2" stroke="#e0e0e0" stroke-width="0.6" stroke-dasharray="1.5 1.5"/><line x1="12" y1="263.2" x2="997" y2="263.2" stroke="#e0e0e0" stroke-width="0.6" stroke-dasharray="1.5 1.5"/><line x1="12" y1="280.3" x2="997" y2="280.3" stroke="#e0e0e0" stroke-width="0.6" stroke-dasharray="1.5 1.5"/><line x1="12" y1="297.4" x2="997" y2="297.4" stroke="#e0e0e0" stroke-width="0.6" stroke-dasharray="1.5 1.5"/><line x1="12" y1="314.4" x2="997" y2="314.4" stroke="#e0e0e0" stroke-width="0.6" stroke-dasharray="1.5 1.5"/><line x1="12" y1="331.5" x2="997" y2="331.5" stroke="#e0e0e0" stroke-width="0.6" stroke-dasharray="1.5 1.5"/><line x1="12" y1="348.5" x2="997" y2="348.5" stroke="#e0e0e0" stroke-width="0.6" stroke-dasharray="1.5 1.5"/><line x1="12" y1="365.6" x2="997" y2="365.6" stroke="#e0e0e0" stroke-width="0.6" stroke-dasharray="1.5 1.5"/><line x1="12" y1="382.7" x2="997" y2="382.7" stroke="#e0e0e0" stroke-width="0.6" stroke-dasharray="1.5 1.5"/><line x1="12" y1="399.7" x2="997" y2="399.7" stroke="#e0e0e0" stroke-width="0.6" stroke-dasharray="1.5 1.5"/><line x1="12" y1="416.8" x2="997" y2="416.8" stroke="#e0e0e0" stroke-width="0.6" stroke-dasharray="1.5 1.5"/><line x1="12" y1="433.8" x2="997" y2="433.8" stroke="#e0e0e0" stroke-width="0.6" stroke-dasharray="1.5 1.5"/><line x1="12" y1="450.9" x2="997" y2="450.9" stroke="#e0e0e0" stroke-width="0.6" stroke-dasharray="1.5 1.5"/><line x1="12" y1="468.0" x2="997" y2="468.0" stroke="#e0e0e0" stroke-width="0.6" stroke-dasharray="1.5 1.5"/><polyline points="10.8,456.0 15.5,457.1 20.6,454.6 25.3,434.0 29.2,438.1 34.3,438.8 38.7,438.0 43.9,422.6 48.5,427.1 52.9,434.8 58,428.3 63.2,427.6 67.6,425.8 71.7,425.20000000000005 76.9,416.20000000000005 81.3,414.1 85.2,413.6 89.8,412.3 95.5,414.90000000000003 100.1,412.90000000000003 104.5,403.8 108.9,403.1 113.5,401.8 118.2,400.5 123.4,399.40000000000003 127,389.1 131.6,388.90000000000003 136.8,388.3 141.9,386.3 147.1,384.5 154.8,384.5 161.3,380.6 166.5,379.3 171.6,378.8 178,377.20000000000005 183.2,376.70000000000005 189.7,374.1 194.8,372.90000000000003 200,369.8 205.2,367.6 211.6,365.8 219.4,363.70000000000005 224.5,361.90000000000003 231,360.1 238.7,359.8 243.9,362.6 251.6,362.1 259.4,359.8 268.4,357.20000000000005 277.4,356.70000000000005 283.9,354.1 290.3,349.8 295,354.70000000000005 303.2,352.90000000000003 311,351.1 314.8,349.0 322.6,348.20000000000005 331.6,344.6 339.4,343.3 347.1,342.0 357.4,341.20000000000005 365.2,339.40000000000003 378,338.6 385.8,338.6 393.5,336.1 400,334.6 406.5,331.20000000000005 415.5,329.40000000000003 425.8,326.6 433.5,325.3 441.3,320.90000000000003 452.9,314.5 465.8,310.6 476.1,302.90000000000003 487.7,299.8 503.2,295.1 513.5,293.8 520,291.8 534.2,290.70000000000005 547.1,290.5 556.1,285.3 567.7,282.20000000000005 580.6,277.1 589.7,276.6 592.3,274.5 600,273.90000000000003 610.3,271.1 616,279.5 620.6,276.20000000000005 625.8,276.0 631,273.40000000000003 638.7,272.90000000000003 643.9,268.20000000000005 651.6,266.90000000000003 658,265.1 667.1,264.3 671.7,261.20000000000005 676.6,265.1 682.6,262.0 692.9,259.40000000000003 701.9,256.90000000000003 711,256.1 716.1,255.29999999999998 722.6,255.29999999999998 727.7,247.6 732.9,245.79999999999998 736.8,241.9 744.5,240.6 754.8,239.29999999999998 762.6,238.79999999999998 770.3,236.2 779.4,235.4 792.3,231.1 800,230.1 806.5,236.5 811.6,236.5 820.6,228.7 825.8,226.7 832.3,224.7 845.2,221.1 859.4,219.5 869.7,219.0 878.7,217.2 890.3,217.2 895.5,214.6 904.5,214.6 909.7,217.7 913.5,217.2 918.2,224.7 931.6,222.29999999999998 938,222.29999999999998 941.9,226.0 947.1,223.4 962.6,221.79999999999998 972.4,219.0 978,221.1 983.2,231.9 989.7,230.1 997.4,229.29999999999998" fill="none" stroke="#9cd6ac" stroke-width="1"/><polyline points="10.8,455.4 15.5,453.5 20.6,451 25.3,433.4 29.2,429.5 34.3,434.2 38.7,433.4 43.9,413 48.5,426.5 52.9,434.2 58,427.7 63.2,427 67.6,425.2 71.7,424.6 76.9,415.6 81.3,413.5 85.2,413 89.8,411.7 95.5,414.3 100.1,412.3 104.5,403.2 108.9,402.5 113.5,401.2 118.2,399.9 123.4,398.8 127,388.5 131.6,388.3 136.8,387.7 141.9,385.7 147.1,383.9 154.8,383.9 161.3,380 166.5,378.7 171.6,378.2 178,376.6 183.2,376.1 189.7,373.5 194.8,372.3 200,369.2 205.2,367 211.6,365.2 219.4,363.1 224.5,361.3 231,359.5 238.7,359.2 243.9,362 251.6,361.5 259.4,359.2 268.4,356.6 277.4,356.1 283.9,353.5 290.3,349.2 295,354.1 303.2,352.3 311,350.5 314.8,348.4 322.6,347.6 331.6,344 339.4,342.7 347.1,341.4 357.4,340.6 365.2,338.8 378,338 385.8,338 393.5,335.5 400,334 406.5,330.6 415.5,328.8 425.8,326 433.5,324.7 441.3,320.3 452.9,313.9 465.8,310 476.1,302.3 487.7,299.2 503.2,294.5 513.5,293.2 520,291.2 534.2,290.1 547.1,289.9 556.1,284.7 567.7,281.6 580.6,276.5 589.7,276 592.3,273.9 600,273.3 610.3,270.5 616,277.4 620.6,275.6 625.8,275.4 631,272.8 638.7,272.3 643.9,267.6 651.6,266.3 658,264.5 667.1,263.7 671.7,260.6 676.6,264.5 682.6,261.4 692.9,258.8 701.9,256.3 711,255.5 716.1,254.7 722.6,254.7 727.7,247 732.9,245.2 736.8,241.3 744.5,240 754.8,238.7 762.6,238.2 770.3,235.6 779.4,234.8 792.3,230.5 800,229.5 806.5,234.4 811.6,234.4 820.6,226.6 825.8,226.1 832.3,224.1 845.2,220.5 859.4,218.9 869.7,218.4 878.7,216.6 890.3,216.6 895.5,214 904.5,214 909.7,217.1 913.5,216.6 918.2,224.1 931.6,221.7 938,221.7 941.9,225.4 947.1,222.8 962.6,221.2 972.4,218.4 978,220.5 983.2,231.3 989.7,229.5 997.4,228.7" fill="none" stroke="#2f2d7a" stroke-width="1.25" stroke-linejoin="round"/><rect x="8.5" y="477" width="1013.5" height="1" fill="#6a6a6a"/></svg><div class="t" style="left:12.5px;top:190.10px;font-size:6.0px;color:#202020;font-family:'Liberation Sans', sans-serif;transform:scaleX(0.84);transform-origin:0 50%;"><span style="color:#3535a0">Balance</span> / <span style="color:#50c050">Equity</span> / Every tick (the most precise method based on all available least timeframes to generate each tick) / 89.94%</div><div class="t" style="left:1000.7px;top:193.16px;font-size:4.9px;color:#303030;font-family:'Liberation Sans', sans-serif;">23304</div><div class="t" style="left:1000.7px;top:210.22px;font-size:4.9px;color:#303030;font-family:'Liberation Sans', sans-serif;">22433</div><div class="t" style="left:1000.7px;top:227.28px;font-size:4.9px;color:#303030;font-family:'Liberation Sans', sans-serif;">21562</div><div class="t" style="left:1000.7px;top:244.34px;font-size:4.9px;color:#303030;font-family:'Liberation Sans', sans-serif;">20691</div><div class="t" style="left:1000.7px;top:261.40px;font-size:4.9px;color:#303030;font-family:'Liberation Sans', sans-serif;">19820</div><div class="t" style="left:1000.7px;top:278.46px;font-size:4.9px;color:#303030;font-family:'Liberation Sans', sans-serif;">18949</div><div class="t" style="left:1000.7px;top:295.52px;font-size:4.9px;color:#303030;font-family:'Liberation Sans', sans-serif;">18078</div><div class="t" style="left:1000.7px;top:312.58px;font-size:4.9px;color:#303030;font-family:'Liberation Sans', sans-serif;">17207</div><div class="t" style="left:1000.7px;top:329.64px;font-size:4.9px;color:#303030;font-family:'Liberation Sans', sans-serif;">16336</div><div class="t" style="left:1000.7px;top:346.70px;font-size:4.9px;color:#303030;font-family:'Liberation Sans', sans-serif;">15465</div><div class="t" style="left:1000.7px;top:363.76px;font-size:4.9px;color:#303030;font-family:'Liberation Sans', sans-serif;">14594</div><div class="t" style="left:1000.7px;top:380.82px;font-size:4.9px;color:#303030;font-family:'Liberation Sans', sans-serif;">13723</div><div class="t" style="left:1000.7px;top:397.88px;font-size:4.9px;color:#303030;font-family:'Liberation Sans', sans-serif;">12852</div><div class="t" style="left:1000.7px;top:414.94px;font-size:4.9px;color:#303030;font-family:'Liberation Sans', sans-serif;">11980</div><div class="t" style="left:1000.7px;top:432.00px;font-size:4.9px;color:#303030;font-family:'Liberation Sans', sans-serif;">11109</div><div class="t" style="left:1000.7px;top:449.06px;font-size:4.9px;color:#303030;font-family:'Liberation Sans', sans-serif;">10238</div><div class="t" style="left:1000.7px;top:466.12px;font-size:4.9px;color:#303030;font-family:'Liberation Sans', sans-serif;">9367</div><div class="t" style="left:10.9px;top:470.06px;font-size:4.9px;color:#303030">0</div><div class="t" style="left:-2.1px;width:30px;text-align:right;top:470.06px;font-size:4.9px;color:#303030">4</div><div class="t" style="left:14.9px;width:30px;text-align:right;top:470.06px;font-size:4.9px;color:#303030">8</div><div class="t" style="left:32.0px;width:30px;text-align:right;top:470.06px;font-size:4.9px;color:#303030">11</div><div class="t" style="left:49.1px;width:30px;text-align:right;top:470.06px;font-size:4.9px;color:#303030">15</div><div class="t" style="left:66.1px;width:30px;text-align:right;top:470.06px;font-size:4.9px;color:#303030">19</div><div class="t" style="left:83.2px;width:30px;text-align:right;top:470.06px;font-size:4.9px;color:#303030">22</div><div class="t" style="left:100.3px;width:30px;text-align:right;top:470.06px;font-size:4.9px;color:#303030">26</div><div class="t" style="left:117.4px;width:30px;text-align:right;top:470.06px;font-size:4.9px;color:#303030">30</div><div class="t" style="left:134.4px;width:30px;text-align:right;top:470.06px;font-size:4.9px;color:#303030">33</div><div class="t" style="left:151.5px;width:30px;text-align:right;top:470.06px;font-size:4.9px;color:#303030">37</div><div class="t" style="left:168.6px;width:30px;text-align:right;top:470.06px;font-size:4.9px;color:#303030">41</div><div class="t" style="left:185.6px;width:30px;text-align:right;top:470.06px;font-size:4.9px;color:#303030">44</div><div class="t" style="left:202.7px;width:30px;text-align:right;top:470.06px;font-size:4.9px;color:#303030">48</div><div class="t" style="left:219.8px;width:30px;text-align:right;top:470.06px;font-size:4.9px;color:#303030">52</div><div class="t" style="left:236.9px;width:30px;text-align:right;top:470.06px;font-size:4.9px;color:#303030">55</div><div class="t" style="left:253.9px;width:30px;text-align:right;top:470.06px;font-size:4.9px;color:#303030">59</div><div class="t" style="left:271.0px;width:30px;text-align:right;top:470.06px;font-size:4.9px;color:#303030">63</div><div class="t" style="left:288.1px;width:30px;text-align:right;top:470.06px;font-size:4.9px;color:#303030">66</div><div class="t" style="left:305.1px;width:30px;text-align:right;top:470.06px;font-size:4.9px;color:#303030">70</div><div class="t" style="left:322.2px;width:30px;text-align:right;top:470.06px;font-size:4.9px;color:#303030">74</div><div class="t" style="left:339.3px;width:30px;text-align:right;top:470.06px;font-size:4.9px;color:#303030">77</div><div class="t" style="left:356.3px;width:30px;text-align:right;top:470.06px;font-size:4.9px;color:#303030">81</div><div class="t" style="left:373.4px;width:30px;text-align:right;top:470.06px;font-size:4.9px;color:#303030">85</div><div class="t" style="left:390.5px;width:30px;text-align:right;top:470.06px;font-size:4.9px;color:#303030">88</div><div class="t" style="left:407.6px;width:30px;text-align:right;top:470.06px;font-size:4.9px;color:#303030">92</div><div class="t" style="left:424.6px;width:30px;text-align:right;top:470.06px;font-size:4.9px;color:#303030">96</div><div class="t" style="left:441.7px;width:30px;text-align:right;top:470.06px;font-size:4.9px;color:#303030">99</div><div class="t" style="left:458.8px;width:30px;text-align:right;top:470.06px;font-size:4.9px;color:#303030">103</div><div class="t" style="left:475.8px;width:30px;text-align:right;top:470.06px;font-size:4.9px;color:#303030">107</div><div class="t" style="left:492.9px;width:30px;text-align:right;top:470.06px;font-size:4.9px;color:#303030">110</div><div class="t" style="left:510.0px;width:30px;text-align:right;top:470.06px;font-size:4.9px;color:#303030">114</div><div class="t" style="left:527.0px;width:30px;text-align:right;top:470.06px;font-size:4.9px;color:#303030">118</div><div class="t" style="left:544.1px;width:30px;text-align:right;top:470.06px;font-size:4.9px;color:#303030">121</div><div class="t" style="left:561.2px;width:30px;text-align:right;top:470.06px;font-size:4.9px;color:#303030">125</div><div class="t" style="left:578.3px;width:30px;text-align:right;top:470.06px;font-size:4.9px;color:#303030">129</div><div class="t" style="left:595.3px;width:30px;text-align:right;top:470.06px;font-size:4.9px;color:#303030">132</div><div class="t" style="left:612.4px;width:30px;text-align:right;top:470.06px;font-size:4.9px;color:#303030">136</div><div class="t" style="left:629.5px;width:30px;text-align:right;top:470.06px;font-size:4.9px;color:#303030">140</div><div class="t" style="left:646.5px;width:30px;text-align:right;top:470.06px;font-size:4.9px;color:#303030">143</div><div class="t" style="left:663.6px;width:30px;text-align:right;top:470.06px;font-size:4.9px;color:#303030">147</div><div class="t" style="left:680.7px;width:30px;text-align:right;top:470.06px;font-size:4.9px;color:#303030">151</div><div class="t" style="left:697.7px;width:30px;text-align:right;top:470.06px;font-size:4.9px;color:#303030">154</div><div class="t" style="left:714.8px;width:30px;text-align:right;top:470.06px;font-size:4.9px;color:#303030">158</div><div class="t" style="left:731.9px;width:30px;text-align:right;top:470.06px;font-size:4.9px;color:#303030">162</div><div class="t" style="left:749.0px;width:30px;text-align:right;top:470.06px;font-size:4.9px;color:#303030">165</div><div class="t" style="left:766.0px;width:30px;text-align:right;top:470.06px;font-size:4.9px;color:#303030">169</div><div class="t" style="left:783.1px;width:30px;text-align:right;top:470.06px;font-size:4.9px;color:#303030">173</div><div class="t" style="left:800.2px;width:30px;text-align:right;top:470.06px;font-size:4.9px;color:#303030">176</div><div class="t" style="left:817.2px;width:30px;text-align:right;top:470.06px;font-size:4.9px;color:#303030">180</div><div class="t" style="left:834.3px;width:30px;text-align:right;top:470.06px;font-size:4.9px;color:#303030">184</div><div class="t" style="left:851.4px;width:30px;text-align:right;top:470.06px;font-size:4.9px;color:#303030">187</div><div class="t" style="left:868.4px;width:30px;text-align:right;top:470.06px;font-size:4.9px;color:#303030">191</div><div class="t" style="left:885.5px;width:30px;text-align:right;top:470.06px;font-size:4.9px;color:#303030">195</div><div class="t" style="left:902.6px;width:30px;text-align:right;top:470.06px;font-size:4.9px;color:#303030">198</div><div class="t" style="left:919.7px;width:30px;text-align:right;top:470.06px;font-size:4.9px;color:#303030">202</div><div class="t" style="left:936.7px;width:30px;text-align:right;top:470.06px;font-size:4.9px;color:#303030">206</div><div class="t" style="left:953.8px;width:30px;text-align:right;top:470.06px;font-size:4.9px;color:#303030">209</div><div style="position:absolute;left:0;top:478px;width:1022px;height:12px;background:#f0f0f0"></div><div style="position:absolute;left:0;top:477px;width:8.5px;height:12px;background:#d8e0eb"></div><div style="position:absolute;left:8.5px;top:477px;width:1px;height:12px;background:#c0c4ca"></div><div style="position:absolute;left:0;top:477px;width:8.5px;height:12px;background:#d8e0eb"></div><div class="t" style="left:-5px;top:476.5px;width:18px;height:7px;line-height:7px;font-size:6.3px;color:#303030;transform:rotate(-90deg);transform-origin:9px 3.5px;text-align:center">Tester</div><div style="position:absolute;left:73.2px;top:477px;width:27.4px;height:10.5px;background:#fff;border:1px solid #505050;border-top:none;box-sizing:border-box"></div><div class="t" style="left:15px;top:478.80px;font-size:6.5px;color:#787878;font-family:'Liberation Sans', sans-serif;transform:scaleX(0.93);transform-origin:0 50%;">Settings</div><div style="position:absolute;left:43px;top:479px;width:1px;height:8px;background:#b0b0b0"></div><div class="t" style="left:48px;top:478.80px;font-size:6.5px;color:#787878;font-family:'Liberation Sans', sans-serif;transform:scaleX(0.93);transform-origin:0 50%;">Results</div><div class="t" style="left:79px;top:478.80px;font-size:6.5px;color:#000;font-family:'Liberation Sans', sans-serif;transform:scaleX(0.93);transform-origin:0 50%;">Graph</div><div class="t" style="left:106px;top:478.80px;font-size:6.5px;color:#787878;font-family:'Liberation Sans', sans-serif;transform:scaleX(0.93);transform-origin:0 50%;">Report</div><div style="position:absolute;left:130.5px;top:479px;width:1px;height:8px;background:#b0b0b0"></div><div class="t" style="left:136px;top:478.80px;font-size:6.5px;color:#787878;font-family:'Liberation Sans', sans-serif;transform:scaleX(0.93);transform-origin:0 50%;">Journal</div><div style="position:absolute;left:161px;top:479px;width:1px;height:8px;background:#b0b0b0"></div><div style="position:absolute;left:0;top:489px;width:1024px;height:15px;background:#efefef"></div><div style="position:absolute;left:0;top:490.5px;width:1024px;height:1px;background:#dcdcdc"></div><div style="position:absolute;left:0;top:503px;width:1024px;height:1px;background:#707070"></div><div style="position:absolute;left:654.9px;top:491px;width:1px;height:12px;background:#d0d0d0"></div><div style="position:absolute;left:716.3px;top:491px;width:1px;height:12px;background:#d0d0d0"></div><div style="position:absolute;left:771.2px;top:491px;width:1px;height:12px;background:#d0d0d0"></div><div style="position:absolute;left:809.4px;top:491px;width:1px;height:12px;background:#d0d0d0"></div><div style="position:absolute;left:847.6px;top:491px;width:1px;height:12px;background:#d0d0d0"></div><div style="position:absolute;left:882.5px;top:491px;width:1px;height:12px;background:#d0d0d0"></div><div style="position:absolute;left:920.7px;top:491px;width:1px;height:12px;background:#d0d0d0"></div><div style="position:absolute;left:955.5px;top:491px;width:1px;height:12px;background:#d0d0d0"></div><div class="t" style="left:2px;top:494.12px;font-size:6.8px;color:#101010;font-family:'Liberation Sans', sans-serif;transform:scaleX(0.91);transform-origin:0 50%;">Tester graph page</div><div class="t" style="left:657.5px;top:494.17px;font-size:5.55px;color:#202020;font-family:'Liberation Sans', sans-serif;">AF STERLING</div><div style="position:absolute;left:958px;top:493.3px;width:12.7px;height:7.7px;background:linear-gradient(90deg,#7a9a3a,#b8d070 30%,#3a7a4a 60%,#2a5a7a)"></div><div class="t" style="left:973.2px;top:494.23px;font-size:5.95px;color:#202020;font-family:'Liberation Sans', sans-serif;">994982/304 kb</div></div>
</body></html>
